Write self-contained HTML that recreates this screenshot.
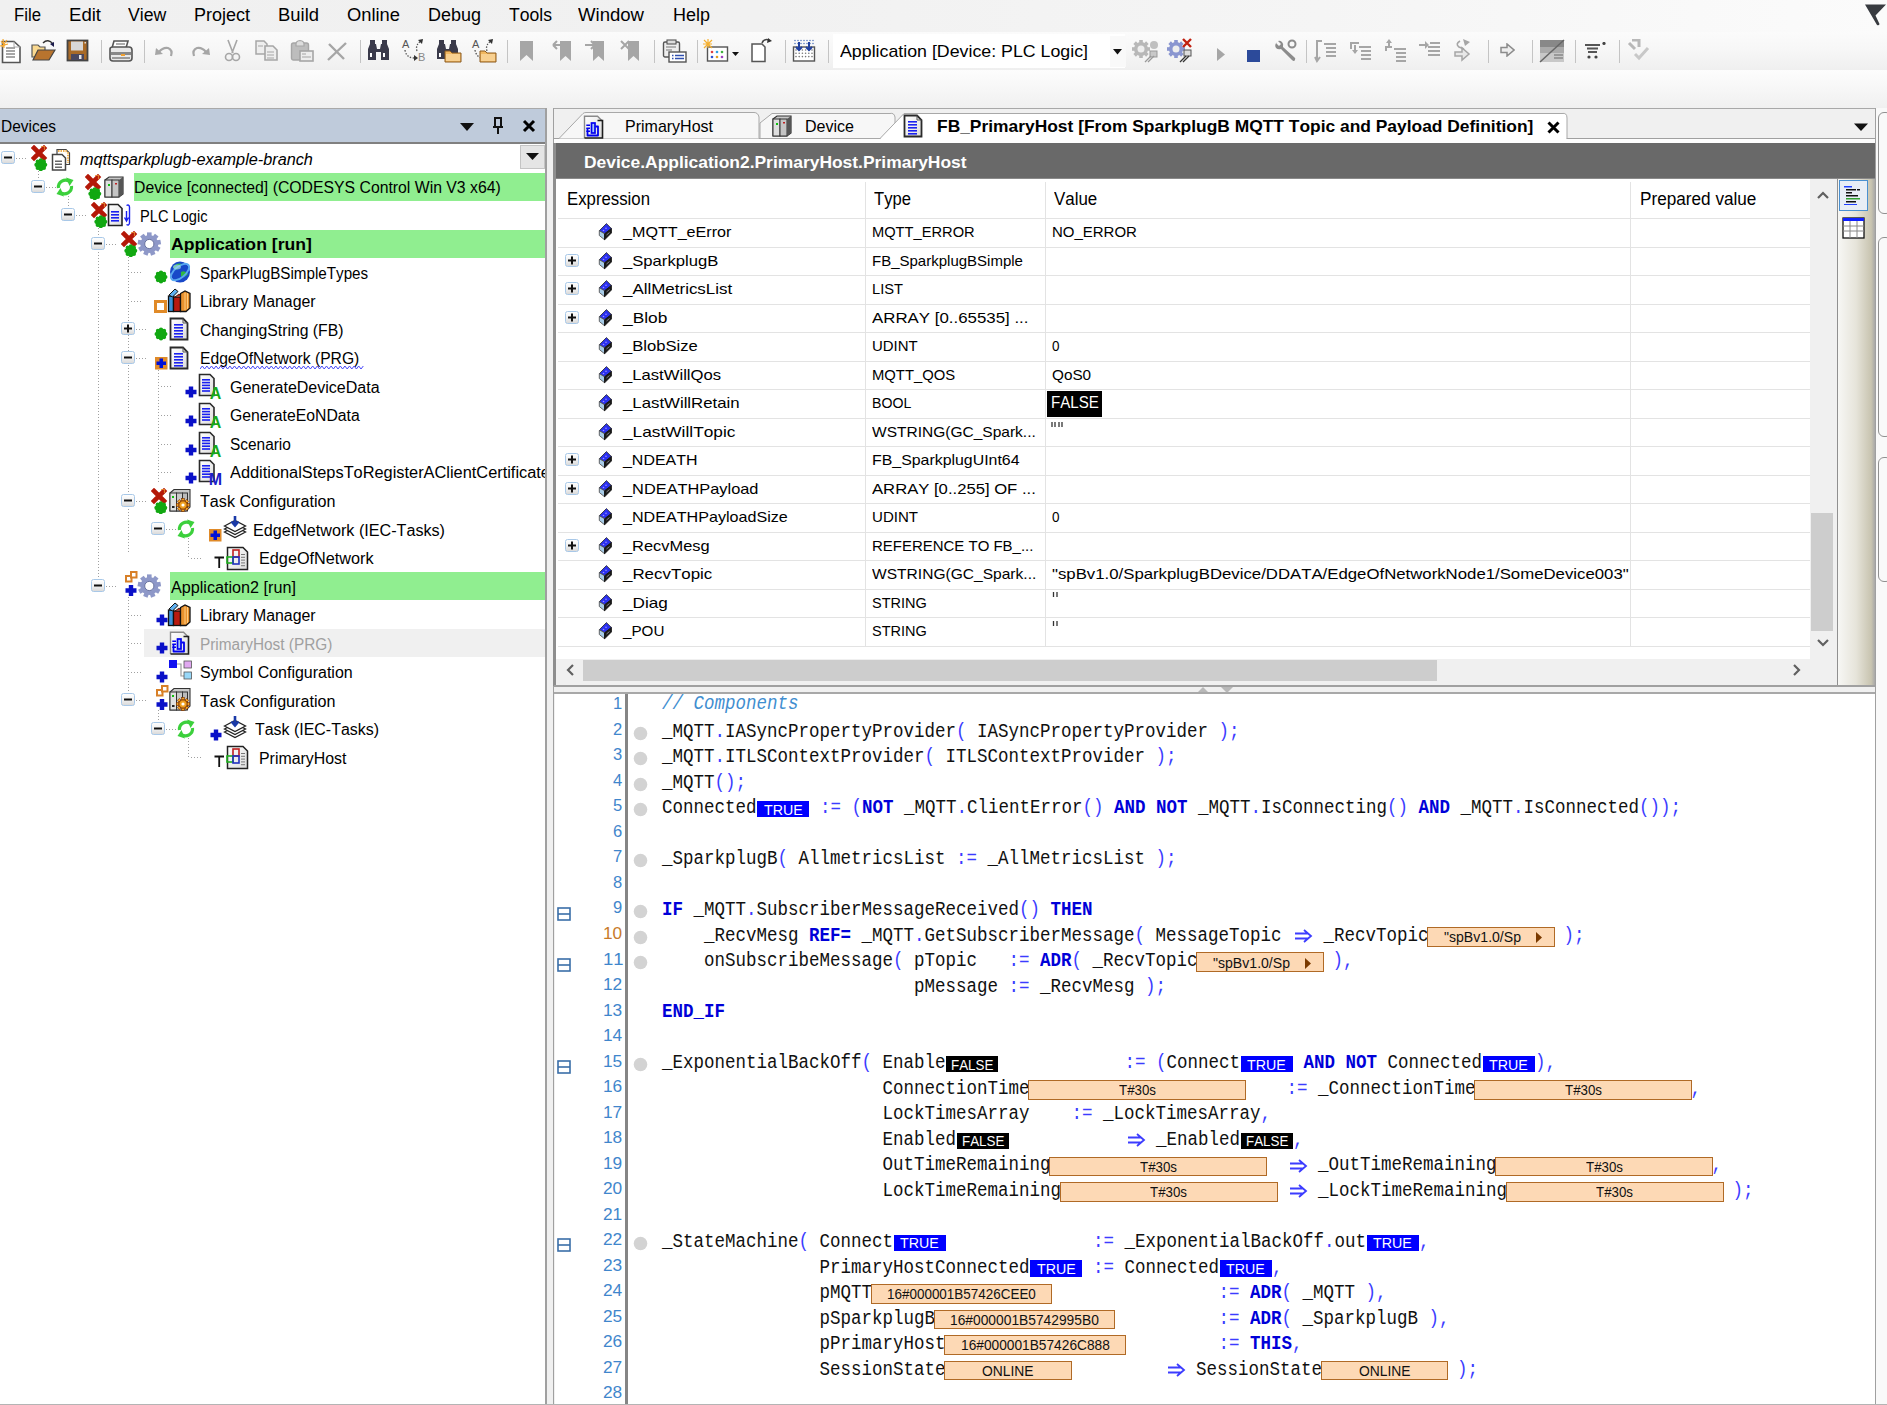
<!DOCTYPE html>
<html><head><meta charset="utf-8"><style>
html,body{margin:0;padding:0;}
body{width:1887px;height:1405px;overflow:hidden;position:relative;background:#f0f0f0;font-family:"Liberation Sans",sans-serif;font-kerning:none;}
div,svg{position:absolute;}
.t{white-space:pre;line-height:1;}
</style></head><body>
<svg width="0" height="0" style="left:0;top:0"><defs><linearGradient id="bxg" x1="0" y1="0" x2="0" y2="1"><stop offset="0" stop-color="#ffffff"/><stop offset="0.5" stop-color="#f2f2f2"/><stop offset="1" stop-color="#d8d8d8"/></linearGradient><linearGradient id="pgg" x1="0" y1="0" x2="1" y2="1"><stop offset="0" stop-color="#fff"/><stop offset="1" stop-color="#dcdcdc"/></linearGradient></defs></svg>
<div style="left:0px;top:0px;width:1887px;height:32px;background:linear-gradient(90deg,#f0f0f0 0%,#f1f1f1 40%,#f5f5f5 70%,#fbfbfb 100%);"></div>
<div class="t" style="left:14px;top:6.68px;font-size:17.5px;color:#000;transform:scale(0.9573,1.0);transform-origin:0 14.82px;">File</div>
<div class="t" style="left:69px;top:6.68px;font-size:17.5px;color:#000;transform:scale(1.0611,1.0);transform-origin:0 14.82px;">Edit</div>
<div class="t" style="left:128px;top:6.68px;font-size:17.5px;color:#000;transform:scale(1.0100,1.0);transform-origin:0 14.82px;">View</div>
<div class="t" style="left:194px;top:6.68px;font-size:17.5px;color:#000;transform:scale(1.0281,1.0);transform-origin:0 14.82px;">Project</div>
<div class="t" style="left:278px;top:6.68px;font-size:17.5px;color:#000;transform:scale(1.0534,1.0);transform-origin:0 14.82px;">Build</div>
<div class="t" style="left:347px;top:6.68px;font-size:17.5px;color:#000;transform:scale(1.0476,1.0);transform-origin:0 14.82px;">Online</div>
<div class="t" style="left:428px;top:6.68px;font-size:17.5px;color:#000;transform:scale(1.0276,1.0);transform-origin:0 14.82px;">Debug</div>
<div class="t" style="left:509px;top:6.68px;font-size:17.5px;color:#000;transform:scale(1.0034,1.0);transform-origin:0 14.82px;">Tools</div>
<div class="t" style="left:578px;top:6.68px;font-size:17.5px;color:#000;transform:scale(1.0602,1.0);transform-origin:0 14.82px;">Window</div>
<div class="t" style="left:673px;top:6.68px;font-size:17.5px;color:#000;transform:scale(1.0278,1.0);transform-origin:0 14.82px;">Help</div>
<svg style="left:1858px;top:3px;" width="29" height="26" viewBox="0 0 29 26"><path d="M7 1.5 H28 L17.5 12.5 L21.5 21 Q21 23 19 22 Z" fill="#383b40"/></svg>
<div style="left:0px;top:32px;width:1887px;height:38px;background:linear-gradient(#fbfbfb 0%,#f7f7f7 45%,#efefef 100%);"></div>
<div style="left:0px;top:70px;width:1887px;height:38px;background:linear-gradient(#fdfdfd 0%,#f8f8f8 40%,#f0f0f0 100%);"></div>
<div style="left:101px;top:40px;width:1px;height:23px;background:#c4c4c4;"></div>
<div style="left:144px;top:40px;width:1px;height:23px;background:#c4c4c4;"></div>
<div style="left:360px;top:40px;width:1px;height:23px;background:#c4c4c4;"></div>
<div style="left:507px;top:40px;width:1px;height:23px;background:#c4c4c4;"></div>
<div style="left:654px;top:40px;width:1px;height:23px;background:#c4c4c4;"></div>
<div style="left:697px;top:40px;width:1px;height:23px;background:#c4c4c4;"></div>
<div style="left:785px;top:40px;width:1px;height:23px;background:#c4c4c4;"></div>
<div style="left:828px;top:40px;width:1px;height:23px;background:#c4c4c4;"></div>
<div style="left:1306px;top:40px;width:1px;height:23px;background:#c4c4c4;"></div>
<div style="left:1488px;top:40px;width:1px;height:23px;background:#c4c4c4;"></div>
<div style="left:1532px;top:40px;width:1px;height:23px;background:#c4c4c4;"></div>
<div style="left:1575px;top:40px;width:1px;height:23px;background:#c4c4c4;"></div>
<div style="left:1619px;top:40px;width:1px;height:23px;background:#c4c4c4;"></div>
<svg style="left:0px;top:39px;" width="22" height="25" viewBox="0 0 22 25"><path d="M2.5 2.5 H14 L20 8 V23.5 H2.5Z" fill="#fff" stroke="#555" stroke-width="1.6"/><path d="M14 2.5 V8 H20" fill="none" stroke="#aaa" stroke-width="1"/><path d="M6 9 H15 M6 12 H15 M6 15 H15 M6 18 H15" stroke="#8a8a8a" stroke-width="1.4"/><path d="M1 2 L5 7 M0 7 L8 5 M3 0 L4 9 M7 1 L2 8" stroke="#f5a830" stroke-width="1.2"/></svg>
<svg style="left:30px;top:39px;" width="26" height="22" viewBox="0 0 26 22"><path d="M2 6 H8 L10 8 H15 V18 H2Z" fill="#fad990" stroke="#555" stroke-width="1.2"/><path d="M3 21 L8 11 H25 L19 21Z" fill="#b8742e" stroke="#444" stroke-width="1.2"/><path d="M13 4 Q18 -1 23 5" fill="none" stroke="#333" stroke-width="1.4"/><path d="M20 5 L24 8 L24 3Z" fill="#1a1a4a"/></svg>
<svg style="left:66px;top:39px;" width="23" height="23" viewBox="0 0 23 23"><rect x="1.5" y="1.5" width="20" height="20" fill="#a86a28" stroke="#444" stroke-width="1.8"/><rect x="5" y="2.5" width="12" height="9" fill="#d8d8d8"/><rect x="5" y="15" width="13" height="6" fill="#4a4860"/><rect x="13" y="16" width="2.5" height="4" fill="#e8e8e8"/><rect x="18.5" y="3" width="1.5" height="1.5" fill="#ddd"/></svg>
<svg style="left:108px;top:39px;" width="26" height="24" viewBox="0 0 26 24"><path d="M6 2 H20 L18 9 H4Z" fill="#fff" stroke="#555" stroke-width="1.6"/><path d="M8 5 H17" stroke="#777" stroke-width="1.2"/><path d="M2 10 Q2 8 5 8 H21 Q24 8 24 11 V19 Q24 22 21 22 H5 Q2 22 2 19Z" fill="#e8e8e8" stroke="#555" stroke-width="1.6"/><rect x="3" y="13" width="20" height="3" fill="#888"/><rect x="13" y="15" width="4" height="2" fill="#f0a030"/><path d="M4 19 H22" stroke="#666" stroke-width="1.2"/></svg>
<svg style="left:154px;top:44px;" width="22" height="15" viewBox="0 0 22 15"><path d="M5 8 Q9 3 14 4 Q19 6 17 12" fill="none" stroke="#a6a6a6" stroke-width="2.2"/><path d="M1 11 L2 4 L9 10Z" fill="#a6a6a6"/></svg>
<svg style="left:189px;top:44px;" width="22" height="15" viewBox="0 0 22 15"><path d="M17 8 Q13 3 8 4 Q3 6 5 12" fill="none" stroke="#a6a6a6" stroke-width="2.2"/><path d="M21 11 L20 4 L13 10Z" fill="#a6a6a6"/></svg>
<svg style="left:224px;top:39px;" width="17" height="23" viewBox="0 0 17 23"><path d="M4 1 L9 14 M13 1 L8 14" stroke="#a6a6a6" stroke-width="1.6" fill="none"/><circle cx="5" cy="18" r="3.5" fill="none" stroke="#a6a6a6" stroke-width="1.6"/><circle cx="12" cy="18" r="3.5" fill="none" stroke="#a6a6a6" stroke-width="1.6"/></svg>
<svg style="left:255px;top:40px;" width="24" height="21" viewBox="0 0 24 21"><path d="M1 1 H9 L12 4 V14 H1Z" fill="#eee" stroke="#a6a6a6" stroke-width="1.5"/><path d="M10 6 H18 L22 10 V20 H10Z" fill="#eee" stroke="#a6a6a6" stroke-width="1.6"/><path d="M3 6 H8 M12 12 H19 M12 15 H19 M12 18 H19" stroke="#a6a6a6" stroke-width="1.1"/></svg>
<svg style="left:290px;top:39px;" width="25" height="23" viewBox="0 0 25 23"><rect x="1.5" y="4" width="17" height="17" rx="2" fill="#bdbdbd" stroke="#a6a6a6" stroke-width="1.4"/><path d="M6 5 Q6 2 10 1.5 Q14 2 14 5 V7 H6Z" fill="#ddd" stroke="#a6a6a6" stroke-width="1.2"/><rect x="10" y="12" width="13" height="10" fill="#eee" stroke="#a6a6a6" stroke-width="1.6"/><path d="M12 15 H16 M12 18 H21" stroke="#a6a6a6" stroke-width="1.2"/></svg>
<svg style="left:326px;top:41px;" width="22" height="21" viewBox="0 0 22 21"><path d="M2 19 L20 2 M3 3 L18 18" stroke="#a6a6a6" stroke-width="2.4"/></svg>
<svg style="left:367px;top:39px;" width="25" height="22" viewBox="0 0 25 22"><rect x="3" y="1" width="5" height="5" fill="#3a3a4a"/><rect x="15" y="1" width="5" height="5" fill="#3a3a4a"/><path d="M1 21 V10 L3 5 H9 L10 10 H13 L14 5 H20 L22 10 V21 H14 V13 H9 V21Z" fill="#3a3a4a"/><rect x="3" y="14" width="2" height="4" fill="#fff"/><rect x="16" y="14" width="2" height="4" fill="#fff"/></svg>
<svg style="left:401px;top:38px;" width="27" height="24" viewBox="0 0 27 24"><text x="1" y="10" font-family="Liberation Sans" font-size="11" fill="#555">A</text><text x="17" y="23" font-family="Liberation Sans" font-size="11" fill="#888">B</text><path d="M4 12 Q5 20 14 20" fill="none" stroke="#555" stroke-width="1.3" stroke-dasharray="1.5 1.5"/><path d="M13 17 L17 20 L13 23Z" fill="#333"/><path d="M16 13 Q14 7 20 3" fill="none" stroke="#555" stroke-width="1.3" stroke-dasharray="1.5 1.5"/><path d="M17 2 L22 1 L21 6Z" fill="#333"/></svg>
<svg style="left:436px;top:39px;" width="27" height="24" viewBox="0 0 27 24"><rect x="3" y="1" width="5" height="5" fill="#3a3a4a"/><rect x="15" y="1" width="5" height="5" fill="#3a3a4a"/><path d="M1 20 V10 L3 5 H9 L10 10 H13 L14 5 H20 L22 10 V20 H14 V13 H9 V20Z" fill="#3a3a4a"/><rect x="3" y="14" width="2" height="4" fill="#fff"/><path d="M9 12 H14 L16 14 H25 V23 H9Z" fill="#f2b860" stroke="#8a5a20" stroke-width="1"/><path d="M10 15 H24 V22 H10Z" fill="#f8d090"/></svg>
<svg style="left:471px;top:38px;" width="27" height="25" viewBox="0 0 27 25"><text x="1" y="10" font-family="Liberation Sans" font-size="11" fill="#555">A</text><path d="M4 12 Q5 18 10 20" fill="none" stroke="#555" stroke-width="1.3" stroke-dasharray="1.5 1.5"/><path d="M16 13 Q14 7 20 3" fill="none" stroke="#555" stroke-width="1.3" stroke-dasharray="1.5 1.5"/><path d="M17 2 L22 1 L21 6Z" fill="#333"/><path d="M9 13 H14 L16 15 H25 V24 H9Z" fill="#f2b860" stroke="#8a5a20" stroke-width="1"/><path d="M10 16 H24 V23 H10Z" fill="#f8d090"/></svg>
<svg style="left:519px;top:39px;" width="16" height="24" viewBox="0 0 16 24"><path d="M1 2 H14 V22 L7.5 16 L1 22Z" fill="#a6a6a6"/></svg>
<svg style="left:552px;top:39px;" width="22" height="24" viewBox="0 0 22 24"><path d="M8 2 H19 V22 L13.5 17 L8 22Z" fill="#a6a6a6"/><path d="M1 6 L5 2 M1 6 L5 10 M1 6 H11" stroke="#a6a6a6" stroke-width="2" fill="none"/></svg>
<svg style="left:585px;top:39px;" width="22" height="24" viewBox="0 0 22 24"><path d="M8 2 H19 V22 L13.5 17 L8 22Z" fill="#a6a6a6"/><path d="M10 6 L6 2 M10 6 L6 10 M10 6 H0" stroke="#a6a6a6" stroke-width="2" fill="none"/></svg>
<svg style="left:620px;top:39px;" width="22" height="24" viewBox="0 0 22 24"><path d="M8 2 H19 V22 L13.5 17 L8 22Z" fill="#a6a6a6"/><path d="M1 2 L9 10 M9 2 L1 10" stroke="#a6a6a6" stroke-width="2" fill="none"/></svg>
<svg style="left:662px;top:39px;" width="26" height="24" viewBox="0 0 26 24"><rect x="1.5" y="3" width="16" height="15" rx="1.5" fill="#eee" stroke="#555" stroke-width="1.4"/><rect x="5" y="1" width="9" height="4" fill="#ddd" stroke="#555" stroke-width="1.1"/><path d="M4 8 H14 M4 11 H10" stroke="#777" stroke-width="1.2"/><rect x="7" y="13" width="17" height="10" fill="#fff" stroke="#555" stroke-width="1.4"/><path d="M10 16.5 H11.5 M13 16.5 H22 M10 19.5 H11.5 M13 19.5 H22" stroke="#3050b0" stroke-width="1.6"/></svg>
<svg style="left:703px;top:39px;" width="38" height="24" viewBox="0 0 38 24"><rect x="4.5" y="8" width="20" height="14" fill="#fff" stroke="#555" stroke-width="1.4"/><circle cx="9" cy="13" r="1.3" fill="#e04040"/><circle cx="14" cy="13" r="1.3" fill="#30a0e0"/><circle cx="19" cy="13" r="1.3" fill="#40b040"/><circle cx="9" cy="18" r="1.3" fill="#3050d0"/><circle cx="14" cy="18" r="1.3" fill="#e0a020"/><circle cx="19" cy="18" r="1.3" fill="#a040c0"/><path d="M1 1 L9 9 M5 0 V9 M0 5 H9 M9 1 L1 9" stroke="#f5b030" stroke-width="1.2"/><path d="M29 13 H36 L32.5 17Z" fill="#111"/></svg>
<svg style="left:750px;top:38px;" width="24" height="25" viewBox="0 0 24 25"><path d="M2 6 H12 L15 9 V23.5 H2Z" fill="#fff" stroke="#555" stroke-width="1.5"/><path d="M12 5 Q14 0 19 2" fill="none" stroke="#444" stroke-width="1.5"/><path d="M18 0 L22 3 L17 5Z" fill="#333"/></svg>
<svg style="left:792px;top:39px;" width="24" height="23" viewBox="0 0 24 23"><rect x="1.5" y="8" width="21" height="14" fill="#fff" stroke="#555" stroke-width="1.4"/><circle cx="4.0" cy="11.0" r="0.8" fill="#777"/><circle cx="4.0" cy="14.3" r="0.8" fill="#777"/><circle cx="4.0" cy="17.6" r="0.8" fill="#777"/><circle cx="7.2" cy="11.0" r="0.8" fill="#777"/><circle cx="7.2" cy="14.3" r="0.8" fill="#777"/><circle cx="7.2" cy="17.6" r="0.8" fill="#777"/><circle cx="10.4" cy="11.0" r="0.8" fill="#777"/><circle cx="10.4" cy="14.3" r="0.8" fill="#777"/><circle cx="10.4" cy="17.6" r="0.8" fill="#777"/><circle cx="13.6" cy="11.0" r="0.8" fill="#777"/><circle cx="13.6" cy="14.3" r="0.8" fill="#777"/><circle cx="13.6" cy="17.6" r="0.8" fill="#777"/><circle cx="16.8" cy="11.0" r="0.8" fill="#777"/><circle cx="16.8" cy="14.3" r="0.8" fill="#777"/><circle cx="16.8" cy="17.6" r="0.8" fill="#777"/><circle cx="20.0" cy="11.0" r="0.8" fill="#777"/><circle cx="20.0" cy="14.3" r="0.8" fill="#777"/><circle cx="20.0" cy="17.6" r="0.8" fill="#777"/><circle cx="3.0" cy="1.5" r="0.8" fill="#6080c0"/><circle cx="3.0" cy="4.5" r="0.8" fill="#6080c0"/><circle cx="6.0" cy="1.5" r="0.8" fill="#6080c0"/><circle cx="6.0" cy="4.5" r="0.8" fill="#6080c0"/><circle cx="9.0" cy="1.5" r="0.8" fill="#6080c0"/><circle cx="9.0" cy="4.5" r="0.8" fill="#6080c0"/><circle cx="12.0" cy="1.5" r="0.8" fill="#6080c0"/><circle cx="12.0" cy="4.5" r="0.8" fill="#6080c0"/><circle cx="15.0" cy="1.5" r="0.8" fill="#6080c0"/><circle cx="15.0" cy="4.5" r="0.8" fill="#6080c0"/><circle cx="18.0" cy="1.5" r="0.8" fill="#6080c0"/><circle cx="18.0" cy="4.5" r="0.8" fill="#6080c0"/><circle cx="21.0" cy="1.5" r="0.8" fill="#6080c0"/><circle cx="21.0" cy="4.5" r="0.8" fill="#6080c0"/><path d="M7 3 V11 M4 8 L7 11 L10 8 M17 3 V11 M14 8 L17 11 L20 8" stroke="#2040a0" stroke-width="2" fill="none"/></svg>
<svg style="left:1132px;top:38px;" width="28" height="26" viewBox="0 0 28 26"><g transform="translate(9,11)"><circle r="7" fill="#b8b8b8"/><rect x="-1.8" y="-9" width="3.6" height="4" fill="#b8b8b8" transform="rotate(0)"/><rect x="-1.8" y="-9" width="3.6" height="4" fill="#b8b8b8" transform="rotate(45)"/><rect x="-1.8" y="-9" width="3.6" height="4" fill="#b8b8b8" transform="rotate(90)"/><rect x="-1.8" y="-9" width="3.6" height="4" fill="#b8b8b8" transform="rotate(135)"/><rect x="-1.8" y="-9" width="3.6" height="4" fill="#b8b8b8" transform="rotate(180)"/><rect x="-1.8" y="-9" width="3.6" height="4" fill="#b8b8b8" transform="rotate(225)"/><rect x="-1.8" y="-9" width="3.6" height="4" fill="#b8b8b8" transform="rotate(270)"/><rect x="-1.8" y="-9" width="3.6" height="4" fill="#b8b8b8" transform="rotate(315)"/><circle r="3.5" fill="#eee"/></g><circle cx="22" cy="7" r="4" fill="#c0c0c0"/><rect x="18" y="13" width="7" height="6" fill="#c8c8c8" stroke="#999"/><path d="M13 24 L19 18 M16 24 L22 18" stroke="#999" stroke-width="1.3"/></svg>
<svg style="left:1167px;top:37px;" width="27" height="27" viewBox="0 0 27 27"><g transform="translate(9,12)"><circle r="7" fill="#8a96d0"/><rect x="-1.8" y="-9" width="3.6" height="4" fill="#8a96d0" transform="rotate(0)"/><rect x="-1.8" y="-9" width="3.6" height="4" fill="#8a96d0" transform="rotate(45)"/><rect x="-1.8" y="-9" width="3.6" height="4" fill="#8a96d0" transform="rotate(90)"/><rect x="-1.8" y="-9" width="3.6" height="4" fill="#8a96d0" transform="rotate(135)"/><rect x="-1.8" y="-9" width="3.6" height="4" fill="#8a96d0" transform="rotate(180)"/><rect x="-1.8" y="-9" width="3.6" height="4" fill="#8a96d0" transform="rotate(225)"/><rect x="-1.8" y="-9" width="3.6" height="4" fill="#8a96d0" transform="rotate(270)"/><rect x="-1.8" y="-9" width="3.6" height="4" fill="#8a96d0" transform="rotate(315)"/><circle r="3.5" fill="#eee"/></g><path d="M16 2 L24 10 M24 2 L16 10" stroke="#c02010" stroke-width="2.4"/><rect x="17" y="13" width="7" height="6" fill="#ddd" stroke="#555"/><path d="M13 25 L19 19 M16 25 L22 19" stroke="#333" stroke-width="1.3"/></svg>
<svg style="left:1216px;top:47px;" width="10" height="15" viewBox="0 0 10 15"><path d="M1 1 L9 7.5 L1 14Z" fill="#a6a6a6"/></svg>
<div style="left:1247px;top:49.5px;width:12.5px;height:12px;background:#2c4a9a;"></div>
<svg style="left:1273px;top:39px;" width="24" height="24" viewBox="0 0 24 24"><path d="M4 3 Q1 6 3 9 Q5 11 8 10 L19 21 Q21 23 22 21 Q23 19 21 18 L10 8 Q11 5 9 3 Q7 1 5 2 L8 5 L6 7 L3 4Z" fill="#8c8c8c"/><circle cx="19" cy="5" r="3.5" fill="none" stroke="#8c8c8c" stroke-width="2"/></svg>
<svg style="left:1314px;top:39px;" width="24" height="24" viewBox="0 0 24 24"><path d="M8 2 H3 V21 M1 18 L3 22 L6 18" fill="none" stroke="#a6a6a6" stroke-width="2"/><path d="M10 5 H22 M12 9 H22 M12 13 H22 M12 17 H22" stroke="#a6a6a6" stroke-width="1.8"/></svg>
<svg style="left:1349px;top:39px;" width="24" height="24" viewBox="0 0 24 24"><path d="M2 10 V4 H10 M6 6 V14" fill="none" stroke="#a6a6a6" stroke-width="2"/><path d="M3 11 L6 15 L9 11Z" fill="#a6a6a6"/><path d="M10 8 H22 M12 12 H22 M12 16 H22 M12 20 H22" stroke="#a6a6a6" stroke-width="1.8"/></svg>
<svg style="left:1384px;top:39px;" width="24" height="24" viewBox="0 0 24 24"><path d="M2 12 V8 H8 M5 9 V2" fill="none" stroke="#a6a6a6" stroke-width="2"/><path d="M2 4 L5 0 L8 4Z" fill="#a6a6a6"/><path d="M10 10 H22 M12 14 H22 M12 18 H22 M12 22 H22" stroke="#a6a6a6" stroke-width="1.8"/></svg>
<svg style="left:1418px;top:39px;" width="24" height="24" viewBox="0 0 24 24"><path d="M1 6 H8" stroke="#a6a6a6" stroke-width="2"/><path d="M7 2 L11 6 L7 10Z" fill="#a6a6a6"/><path d="M12 4 H22 M10 8 H22 M10 12 H22 M10 16 H22" stroke="#a6a6a6" stroke-width="1.8"/></svg>
<svg style="left:1454px;top:38px;" width="18" height="25" viewBox="0 0 18 25"><path d="M6 3 Q1 6 5 9 L10 11" fill="none" stroke="#a6a6a6" stroke-width="1.6"/><path d="M9 1 L16 4 L11 8Z" fill="#a6a6a6"/><path d="M1 14 H8 V10 L15 16 L8 22 V18 H1Z" fill="#e8e8e8" stroke="#a6a6a6" stroke-width="1.5"/></svg>
<svg style="left:1500px;top:43px;" width="15" height="14" viewBox="0 0 15 14"><path d="M1 4.5 H7 V1 L14 7 L7 13 V9.5 H1Z" fill="#eee" stroke="#8c8c8c" stroke-width="1.5"/></svg>
<svg style="left:1539px;top:39px;" width="26" height="25" viewBox="0 0 26 25"><rect x="1" y="1" width="24" height="22" fill="#c8c8c8"/><rect x="1" y="1" width="24" height="7" fill="#888"/><rect x="1" y="8" width="24" height="6" fill="#aaa"/><path d="M1 23 L25 1" stroke="#666" stroke-width="1.5"/><path d="M15 16 H24 M15 19 H24" stroke="#888" stroke-width="1.3"/></svg>
<svg style="left:1584px;top:42px;" width="23" height="18" viewBox="0 0 23 18"><path d="M1 3 H16 M3 6.5 H14 M4 10 H13" stroke="#555" stroke-width="2"/><circle cx="5" cy="15" r="1.6" fill="#444"/><circle cx="12" cy="15" r="1.6" fill="#444"/><circle cx="20" cy="1.5" r="1.6" fill="#444"/></svg>
<svg style="left:1627px;top:39px;" width="24" height="23" viewBox="0 0 24 23"><path d="M2 4 L8 10 M5 1 H12 V8" fill="none" stroke="#b8b8b8" stroke-width="3"/><path d="M8 15 L12 19 L21 9" fill="none" stroke="#c8c8c8" stroke-width="3"/></svg>
<div style="left:833px;top:34px;width:292px;height:34px;background:#ffffff;"></div>
<div class="t" style="left:840px;top:43.11px;font-size:17px;color:#000;transform:scale(1.0457,1.0);transform-origin:0 14.39px;">Application [Device: PLC Logic]</div>
<div style="left:1110px;top:36px;width:16px;height:31px;background:#f9f9f9;"></div>
<svg style="left:1113px;top:49px;" width="10" height="6" viewBox="0 0 10 6"><path d="M0 0 H9 L4.5 5.5Z" fill="#111"/></svg>
<div style="left:0px;top:108px;width:547px;height:1px;background:#a9a9a9;"></div>
<div style="left:0px;top:109px;width:546px;height:34px;background:#bfcbdb;"></div>
<div style="left:0px;top:142px;width:546px;height:2px;background:#808080;"></div>
<div class="t" style="left:1px;top:117.83px;font-size:16.5px;color:#000;transform:scale(0.9372,1.0);transform-origin:0 13.97px;">Devices</div>
<svg style="left:459px;top:122px;" width="16" height="10" viewBox="0 0 16 10"><path d="M1 1 H15 L8 9Z" fill="#111"/></svg>
<svg style="left:491px;top:117px;" width="14" height="18" viewBox="0 0 14 18"><path d="M3 1 H11 M4 1 V10 H10 V1 M2 10 H12 M7 10 V17" fill="none" stroke="#111" stroke-width="2"/></svg>
<svg style="left:521px;top:118px;" width="16" height="16" viewBox="0 0 16 16"><path d="M3 3 L13 13 M13 3 L3 13" stroke="#000" stroke-width="3"/></svg>
<div style="left:0px;top:144px;width:546px;height:1261px;background:#ffffff;"></div>
<div style="left:545px;top:108px;width:2px;height:1297px;background:#a0a0a0;"></div>
<div style="left:520px;top:145px;width:25px;height:24px;background:#e5e5e5;box-sizing:border-box;border:1px solid #c4c4c4;"></div>
<svg style="left:526px;top:153px;" width="13" height="8" viewBox="0 0 13 8"><path d="M0 0 H13 L6.5 7Z" fill="#111"/></svg>
<div style="left:134px;top:173px;width:411px;height:28px;background:#90ee90;"></div>
<div style="left:170px;top:230px;width:375px;height:28px;background:#90ee90;"></div>
<div style="left:170px;top:572px;width:375px;height:28px;background:#90ee90;"></div>
<div style="left:144px;top:629px;width:401px;height:28px;background:#f0f0f0;"></div>
<div style="left:38px;top:168px;width:1px;height:10px;background:repeating-linear-gradient(180deg,#a0a0a0 0 1px,transparent 1px 3px)"></div>
<div style="left:68px;top:196px;width:1px;height:10px;background:repeating-linear-gradient(180deg,#a0a0a0 0 1px,transparent 1px 3px)"></div>
<div style="left:98px;top:225px;width:1px;height:360px;background:repeating-linear-gradient(180deg,#a0a0a0 0 1px,transparent 1px 3px)"></div>
<div style="left:128px;top:254px;width:1px;height:300px;background:repeating-linear-gradient(180deg,#a0a0a0 0 1px,transparent 1px 3px)"></div>
<div style="left:158px;top:370px;width:1px;height:112px;background:repeating-linear-gradient(180deg,#a0a0a0 0 1px,transparent 1px 3px)"></div>
<div style="left:188px;top:538px;width:1px;height:20px;background:repeating-linear-gradient(180deg,#a0a0a0 0 1px,transparent 1px 3px)"></div>
<div style="left:128px;top:597px;width:1px;height:105px;background:repeating-linear-gradient(180deg,#a0a0a0 0 1px,transparent 1px 3px)"></div>
<div style="left:158px;top:710px;width:1px;height:12px;background:repeating-linear-gradient(180deg,#a0a0a0 0 1px,transparent 1px 3px)"></div>
<div style="left:188px;top:738px;width:1px;height:20px;background:repeating-linear-gradient(180deg,#a0a0a0 0 1px,transparent 1px 3px)"></div>
<svg style="left:1px;top:151px;" width="14" height="13" viewBox="0 0 14 13"><rect x="0.5" y="0.5" width="13" height="12" rx="2" fill="url(#bxg)" stroke="#a8c8e8"/><rect x="3" y="5.5" width="8" height="2" fill="#111"/></svg>
<div style="left:16px;top:158px;width:10px;height:1px;background:repeating-linear-gradient(90deg,#a0a0a0 0 1px,transparent 1px 3px)"></div>
<svg style="left:31px;top:180px;" width="14" height="13" viewBox="0 0 14 13"><rect x="0.5" y="0.5" width="13" height="12" rx="2" fill="url(#bxg)" stroke="#a8c8e8"/><rect x="3" y="5.5" width="8" height="2" fill="#111"/></svg>
<div style="left:46px;top:187px;width:10px;height:1px;background:repeating-linear-gradient(90deg,#a0a0a0 0 1px,transparent 1px 3px)"></div>
<svg style="left:61px;top:208px;" width="14" height="13" viewBox="0 0 14 13"><rect x="0.5" y="0.5" width="13" height="12" rx="2" fill="url(#bxg)" stroke="#a8c8e8"/><rect x="3" y="5.5" width="8" height="2" fill="#111"/></svg>
<div style="left:76px;top:215px;width:10px;height:1px;background:repeating-linear-gradient(90deg,#a0a0a0 0 1px,transparent 1px 3px)"></div>
<svg style="left:91px;top:237px;" width="14" height="13" viewBox="0 0 14 13"><rect x="0.5" y="0.5" width="13" height="12" rx="2" fill="url(#bxg)" stroke="#a8c8e8"/><rect x="3" y="5.5" width="8" height="2" fill="#111"/></svg>
<div style="left:106px;top:244px;width:10px;height:1px;background:repeating-linear-gradient(90deg,#a0a0a0 0 1px,transparent 1px 3px)"></div>
<svg style="left:121px;top:322px;" width="14" height="13" viewBox="0 0 14 13"><rect x="0.5" y="0.5" width="13" height="12" rx="2" fill="url(#bxg)" stroke="#a8c8e8"/><rect x="3" y="5.5" width="8" height="2" fill="#111"/><rect x="6" y="2.5" width="2" height="8" fill="#111"/></svg>
<div style="left:136px;top:329px;width:10px;height:1px;background:repeating-linear-gradient(90deg,#a0a0a0 0 1px,transparent 1px 3px)"></div>
<svg style="left:121px;top:351px;" width="14" height="13" viewBox="0 0 14 13"><rect x="0.5" y="0.5" width="13" height="12" rx="2" fill="url(#bxg)" stroke="#a8c8e8"/><rect x="3" y="5.5" width="8" height="2" fill="#111"/></svg>
<div style="left:136px;top:358px;width:10px;height:1px;background:repeating-linear-gradient(90deg,#a0a0a0 0 1px,transparent 1px 3px)"></div>
<svg style="left:121px;top:494px;" width="14" height="13" viewBox="0 0 14 13"><rect x="0.5" y="0.5" width="13" height="12" rx="2" fill="url(#bxg)" stroke="#a8c8e8"/><rect x="3" y="5.5" width="8" height="2" fill="#111"/></svg>
<div style="left:136px;top:501px;width:10px;height:1px;background:repeating-linear-gradient(90deg,#a0a0a0 0 1px,transparent 1px 3px)"></div>
<svg style="left:151px;top:522px;" width="14" height="13" viewBox="0 0 14 13"><rect x="0.5" y="0.5" width="13" height="12" rx="2" fill="url(#bxg)" stroke="#a8c8e8"/><rect x="3" y="5.5" width="8" height="2" fill="#111"/></svg>
<div style="left:166px;top:529px;width:10px;height:1px;background:repeating-linear-gradient(90deg,#a0a0a0 0 1px,transparent 1px 3px)"></div>
<svg style="left:91px;top:579px;" width="14" height="13" viewBox="0 0 14 13"><rect x="0.5" y="0.5" width="13" height="12" rx="2" fill="url(#bxg)" stroke="#a8c8e8"/><rect x="3" y="5.5" width="8" height="2" fill="#111"/></svg>
<div style="left:106px;top:586px;width:10px;height:1px;background:repeating-linear-gradient(90deg,#a0a0a0 0 1px,transparent 1px 3px)"></div>
<svg style="left:121px;top:693px;" width="14" height="13" viewBox="0 0 14 13"><rect x="0.5" y="0.5" width="13" height="12" rx="2" fill="url(#bxg)" stroke="#a8c8e8"/><rect x="3" y="5.5" width="8" height="2" fill="#111"/></svg>
<div style="left:136px;top:700px;width:10px;height:1px;background:repeating-linear-gradient(90deg,#a0a0a0 0 1px,transparent 1px 3px)"></div>
<svg style="left:151px;top:722px;" width="14" height="13" viewBox="0 0 14 13"><rect x="0.5" y="0.5" width="13" height="12" rx="2" fill="url(#bxg)" stroke="#a8c8e8"/><rect x="3" y="5.5" width="8" height="2" fill="#111"/></svg>
<div style="left:166px;top:729px;width:10px;height:1px;background:repeating-linear-gradient(90deg,#a0a0a0 0 1px,transparent 1px 3px)"></div>
<div style="left:131px;top:272px;width:12px;height:1px;background:repeating-linear-gradient(90deg,#a0a0a0 0 1px,transparent 1px 3px)"></div>
<div style="left:131px;top:301px;width:12px;height:1px;background:repeating-linear-gradient(90deg,#a0a0a0 0 1px,transparent 1px 3px)"></div>
<div style="left:131px;top:615px;width:12px;height:1px;background:repeating-linear-gradient(90deg,#a0a0a0 0 1px,transparent 1px 3px)"></div>
<div style="left:131px;top:643px;width:12px;height:1px;background:repeating-linear-gradient(90deg,#a0a0a0 0 1px,transparent 1px 3px)"></div>
<div style="left:131px;top:672px;width:12px;height:1px;background:repeating-linear-gradient(90deg,#a0a0a0 0 1px,transparent 1px 3px)"></div>
<div style="left:161px;top:386px;width:12px;height:1px;background:repeating-linear-gradient(90deg,#a0a0a0 0 1px,transparent 1px 3px)"></div>
<div style="left:161px;top:415px;width:12px;height:1px;background:repeating-linear-gradient(90deg,#a0a0a0 0 1px,transparent 1px 3px)"></div>
<div style="left:161px;top:444px;width:12px;height:1px;background:repeating-linear-gradient(90deg,#a0a0a0 0 1px,transparent 1px 3px)"></div>
<div style="left:161px;top:472px;width:12px;height:1px;background:repeating-linear-gradient(90deg,#a0a0a0 0 1px,transparent 1px 3px)"></div>
<div style="left:191px;top:558px;width:12px;height:1px;background:repeating-linear-gradient(90deg,#a0a0a0 0 1px,transparent 1px 3px)"></div>
<div style="left:191px;top:757px;width:12px;height:1px;background:repeating-linear-gradient(90deg,#a0a0a0 0 1px,transparent 1px 3px)"></div>
<svg style="left:31px;top:145px;" width="18" height="26" viewBox="0 0 18 26"><path d="M3 3 L13 13 M13 3 L3 13" stroke="#b41808" stroke-width="4.6" stroke-linecap="square"/><path d="M5 3 L3 5 M13 11 L11 13" stroke="#b41808" stroke-width="2"/><path d="M10 1.5 L13.5 1.5 L13.5 5" stroke="#e89030" stroke-width="1.2" fill="none" opacity="0.8"/><circle cx="9.8" cy="19.8" r="5.4" fill="#12a812"/><circle cx="14.20" cy="19.80" r="2.1" fill="#12a812"/><circle cx="12.91" cy="22.91" r="2.1" fill="#12a812"/><circle cx="9.80" cy="24.20" r="2.1" fill="#12a812"/><circle cx="6.69" cy="22.91" r="2.1" fill="#12a812"/><circle cx="5.40" cy="19.80" r="2.1" fill="#12a812"/><circle cx="6.69" cy="16.69" r="2.1" fill="#12a812"/><circle cx="9.80" cy="15.40" r="2.1" fill="#12a812"/><circle cx="12.91" cy="16.69" r="2.1" fill="#12a812"/></svg>
<svg style="left:51px;top:148px;" width="20" height="24" viewBox="0 0 20 24"><path d="M6 1.5 H15 L18.5 5 V16.5 H6Z" fill="#fff" stroke="#444" stroke-width="1.2"/><path d="M7 3 H15 L17 5 V15" fill="none" stroke="#f0b050" stroke-width="2" stroke-dasharray="1.5 1"/><path d="M1.5 6.5 H11 L14.5 10 V22 H1.5 Z" fill="#fff" stroke="#444" stroke-width="1.5"/><rect x="4" y="12.5" width="7" height="1.5" fill="#666"/><rect x="4" y="15.5" width="7" height="1.5" fill="#666"/><rect x="4" y="18.5" width="7" height="1.5" fill="#666"/></svg>
<svg style="left:54px;top:176px;" width="22" height="22" viewBox="0 0 22 22"><path d="M4.5 12 A7 7 0 0 1 15.5 5.5" fill="none" stroke="#3cd03c" stroke-width="3.2"/><path d="M12 1.5 L19.5 4 L15.5 10 Z" fill="#3cd03c"/><path d="M17.5 10 A7 7 0 0 1 6.5 16.5" fill="none" stroke="#3cd03c" stroke-width="3.2"/><path d="M10 20.5 L2.5 18 L6.5 12 Z" fill="#3cd03c"/></svg>
<svg style="left:85px;top:174px;" width="18" height="26" viewBox="0 0 18 26"><path d="M3 3 L13 13 M13 3 L3 13" stroke="#b41808" stroke-width="4.6" stroke-linecap="square"/><path d="M5 3 L3 5 M13 11 L11 13" stroke="#b41808" stroke-width="2"/><path d="M10 1.5 L13.5 1.5 L13.5 5" stroke="#e89030" stroke-width="1.2" fill="none" opacity="0.8"/><circle cx="9.8" cy="19.8" r="5.4" fill="#12a812"/><circle cx="14.20" cy="19.80" r="2.1" fill="#12a812"/><circle cx="12.91" cy="22.91" r="2.1" fill="#12a812"/><circle cx="9.80" cy="24.20" r="2.1" fill="#12a812"/><circle cx="6.69" cy="22.91" r="2.1" fill="#12a812"/><circle cx="5.40" cy="19.80" r="2.1" fill="#12a812"/><circle cx="6.69" cy="16.69" r="2.1" fill="#12a812"/><circle cx="9.80" cy="15.40" r="2.1" fill="#12a812"/><circle cx="12.91" cy="16.69" r="2.1" fill="#12a812"/></svg>
<svg style="left:103px;top:175px;" width="22" height="24" viewBox="0 0 22 24"><path d="M2 5 L6 2 H20 V19 L16 22 H2 Z" fill="#c8c8c8" stroke="#333" stroke-width="1.2"/><rect x="2" y="5" width="7" height="17" fill="#dedede" stroke="#333" stroke-width="1"/><rect x="9" y="5" width="7" height="17" fill="#c4c4c4" stroke="#333" stroke-width="1"/><path d="M16 5 L20 2 V19 L16 22Z" fill="#555"/><rect x="5" y="9" width="2" height="2" fill="#10c010"/><rect x="12" y="8" width="2" height="1.5" fill="#c02020"/></svg>
<svg style="left:91px;top:202px;" width="18" height="26" viewBox="0 0 18 26"><path d="M3 3 L13 13 M13 3 L3 13" stroke="#b41808" stroke-width="4.6" stroke-linecap="square"/><path d="M5 3 L3 5 M13 11 L11 13" stroke="#b41808" stroke-width="2"/><path d="M10 1.5 L13.5 1.5 L13.5 5" stroke="#e89030" stroke-width="1.2" fill="none" opacity="0.8"/><circle cx="9.8" cy="19.8" r="5.4" fill="#12a812"/><circle cx="14.20" cy="19.80" r="2.1" fill="#12a812"/><circle cx="12.91" cy="22.91" r="2.1" fill="#12a812"/><circle cx="9.80" cy="24.20" r="2.1" fill="#12a812"/><circle cx="6.69" cy="22.91" r="2.1" fill="#12a812"/><circle cx="5.40" cy="19.80" r="2.1" fill="#12a812"/><circle cx="6.69" cy="16.69" r="2.1" fill="#12a812"/><circle cx="9.80" cy="15.40" r="2.1" fill="#12a812"/><circle cx="12.91" cy="16.69" r="2.1" fill="#12a812"/></svg>
<svg style="left:107px;top:203px;" width="26" height="24" viewBox="0 0 26 24"><path d="M1.5 1.5 H11 L15 5.5 V22.5 H1.5 Z" fill="url(#pgg)" stroke="#222" stroke-width="1.6"/><rect x="4" y="8.0" width="8" height="1.6" fill="#1a20f0"/><rect x="4" y="11.0" width="8" height="1.6" fill="#1a20f0"/><rect x="4" y="14.0" width="8" height="1.6" fill="#1a20f0"/><rect x="4" y="17.0" width="8" height="1.6" fill="#1a20f0"/><path d="M19.5 2.5 Q22 1 22.5 4 V20 Q22 23 19.5 21.5 M19.5 8 V17 M17.5 14.5 L19.5 18 L21.5 14.5" fill="none" stroke="#1a20f0" stroke-width="1.4"/></svg>
<svg style="left:121px;top:231px;" width="18" height="26" viewBox="0 0 18 26"><path d="M3 3 L13 13 M13 3 L3 13" stroke="#b41808" stroke-width="4.6" stroke-linecap="square"/><path d="M5 3 L3 5 M13 11 L11 13" stroke="#b41808" stroke-width="2"/><path d="M10 1.5 L13.5 1.5 L13.5 5" stroke="#e89030" stroke-width="1.2" fill="none" opacity="0.8"/><circle cx="9.8" cy="19.8" r="5.4" fill="#12a812"/><circle cx="14.20" cy="19.80" r="2.1" fill="#12a812"/><circle cx="12.91" cy="22.91" r="2.1" fill="#12a812"/><circle cx="9.80" cy="24.20" r="2.1" fill="#12a812"/><circle cx="6.69" cy="22.91" r="2.1" fill="#12a812"/><circle cx="5.40" cy="19.80" r="2.1" fill="#12a812"/><circle cx="6.69" cy="16.69" r="2.1" fill="#12a812"/><circle cx="9.80" cy="15.40" r="2.1" fill="#12a812"/><circle cx="12.91" cy="16.69" r="2.1" fill="#12a812"/></svg>
<svg style="left:137px;top:232px;" width="25" height="25" viewBox="0 0 25 25"><g transform="translate(12.3,12)"><circle r="9" fill="#8e98c8"/><rect x="-2.3" y="-11.6" width="4.6" height="5" fill="#8e98c8" transform="rotate(0)"/><rect x="-2.3" y="-11.6" width="4.6" height="5" fill="#8e98c8" transform="rotate(40)"/><rect x="-2.3" y="-11.6" width="4.6" height="5" fill="#8e98c8" transform="rotate(80)"/><rect x="-2.3" y="-11.6" width="4.6" height="5" fill="#8e98c8" transform="rotate(120)"/><rect x="-2.3" y="-11.6" width="4.6" height="5" fill="#8e98c8" transform="rotate(160)"/><rect x="-2.3" y="-11.6" width="4.6" height="5" fill="#8e98c8" transform="rotate(200)"/><rect x="-2.3" y="-11.6" width="4.6" height="5" fill="#8e98c8" transform="rotate(240)"/><rect x="-2.3" y="-11.6" width="4.6" height="5" fill="#8e98c8" transform="rotate(280)"/><rect x="-2.3" y="-11.6" width="4.6" height="5" fill="#8e98c8" transform="rotate(320)"/><circle r="4.6" fill="#fff"/><circle r="4.6" fill="none" stroke="#6a74a0" stroke-width="1"/></g></svg>
<svg style="left:154px;top:270px;" width="14" height="14" viewBox="0 0 14 14"><circle cx="7" cy="7" r="5.4" fill="#12a812"/><circle cx="11.40" cy="7.00" r="2.1" fill="#12a812"/><circle cx="10.11" cy="10.11" r="2.1" fill="#12a812"/><circle cx="7.00" cy="11.40" r="2.1" fill="#12a812"/><circle cx="3.89" cy="10.11" r="2.1" fill="#12a812"/><circle cx="2.60" cy="7.00" r="2.1" fill="#12a812"/><circle cx="3.89" cy="3.89" r="2.1" fill="#12a812"/><circle cx="7.00" cy="2.60" r="2.1" fill="#12a812"/><circle cx="10.11" cy="3.89" r="2.1" fill="#12a812"/></svg>
<svg style="left:168px;top:259px;" width="24" height="25" viewBox="0 0 24 25"><ellipse cx="12" cy="13" rx="10" ry="10.5" fill="#1848c8"/><path d="M5 8 Q9 3 14 5 Q12 10 7 11Z M13 13 Q17 11 20 15 Q16 20 13 17Z" fill="#30b840"/><ellipse cx="12" cy="13" rx="11" ry="5.5" fill="none" stroke="#58a8f0" stroke-width="1.8" transform="rotate(-40 12 13)"/><ellipse cx="9" cy="8" rx="4" ry="2.5" fill="#b0d8ff" opacity="0.6"/></svg>
<svg style="left:154px;top:300px;" width="13" height="13" viewBox="0 0 13 13"><rect x="1.5" y="1.5" width="10" height="10" fill="#fff" stroke="#e08a28" stroke-width="3"/></svg>
<svg style="left:167px;top:288px;" width="25" height="25" viewBox="0 0 25 25"><rect x="1.5" y="8" width="5" height="15.5" fill="#3a90d8" stroke="#111" stroke-width="1.3"/><rect x="6.5" y="9" width="7" height="14.5" fill="#b81a10" stroke="#111" stroke-width="1.3"/><path d="M13.5 5.5 L18 3 L23 5.5 V20 L19 23.5 H13.5Z" fill="#e8922e" stroke="#111" stroke-width="1.3"/><path d="M18 5 V22 M20.5 5 V21" stroke="#ffcc80" stroke-width="1"/><path d="M2 7 L8 1 L11 3.5 L5.5 9Z" fill="#60b0f0" stroke="#111" stroke-width="1"/><path d="M8 9 L12 6 L14 8" fill="#c02010" stroke="#111" stroke-width="0.8"/></svg>
<svg style="left:154px;top:327px;" width="14" height="14" viewBox="0 0 14 14"><circle cx="7" cy="7" r="5.4" fill="#12a812"/><circle cx="11.40" cy="7.00" r="2.1" fill="#12a812"/><circle cx="10.11" cy="10.11" r="2.1" fill="#12a812"/><circle cx="7.00" cy="11.40" r="2.1" fill="#12a812"/><circle cx="3.89" cy="10.11" r="2.1" fill="#12a812"/><circle cx="2.60" cy="7.00" r="2.1" fill="#12a812"/><circle cx="3.89" cy="3.89" r="2.1" fill="#12a812"/><circle cx="7.00" cy="2.60" r="2.1" fill="#12a812"/><circle cx="10.11" cy="3.89" r="2.1" fill="#12a812"/></svg>
<svg style="left:169px;top:317px;" width="20" height="24" viewBox="0 0 20 24"><path d="M1.5 1.5 H14 L18.5 6 V22.5 H1.5 Z" fill="url(#pgg)" stroke="#2a2a2a" stroke-width="1.8"/><path d="M14 1.5 V6 H18.5" fill="none" stroke="#555" stroke-width="1"/><rect x="5" y="7.0" width="9" height="1.6" fill="#1a20f0"/><rect x="5" y="10.0" width="9" height="1.6" fill="#1a20f0"/><rect x="5" y="13.0" width="9" height="1.6" fill="#1a20f0"/><rect x="5" y="16.0" width="9" height="1.6" fill="#1a20f0"/><rect x="5" y="19.0" width="9" height="1.6" fill="#1a20f0"/></svg>
<svg style="left:155px;top:357px;" width="13" height="13" viewBox="0 0 13 13"><rect x="0" y="0" width="12.5" height="12.5" fill="#e08a28"/><path d="M4.5 1.5 h3.5 v3 h3 v3.5 h-3 v3 h-3.5 v-3 h-3 v-3.5 h3z" fill="#0010d8"/></svg>
<svg style="left:169px;top:346px;" width="20" height="24" viewBox="0 0 20 24"><path d="M1.5 1.5 H14 L18.5 6 V22.5 H1.5 Z" fill="url(#pgg)" stroke="#2a2a2a" stroke-width="1.8"/><path d="M14 1.5 V6 H18.5" fill="none" stroke="#555" stroke-width="1"/><rect x="5" y="7.0" width="9" height="1.6" fill="#1a20f0"/><rect x="5" y="10.0" width="9" height="1.6" fill="#1a20f0"/><rect x="5" y="13.0" width="9" height="1.6" fill="#1a20f0"/><rect x="5" y="16.0" width="9" height="1.6" fill="#1a20f0"/><rect x="5" y="19.0" width="9" height="1.6" fill="#1a20f0"/></svg>
<svg style="left:185px;top:386px;" width="12" height="12" viewBox="0 0 12 12"><path d="M3.8 0.5 h4.4 v3.3 h3.3 v4.4 h-3.3 v3.3 h-4.4 v-3.3 h-3.3 v-4.4 h3.3z" fill="#0a10c8"/></svg>
<svg style="left:198px;top:373px;" width="26" height="27" viewBox="0 0 26 27"><path d="M1.5 1.5 H12 L16 5.5 V22.5 H1.5 Z" fill="url(#pgg)" stroke="#2a2a2a" stroke-width="1.6"/><rect x="4" y="6.0" width="8" height="1.6" fill="#1a20f0"/><rect x="4" y="8.8" width="8" height="1.6" fill="#1a20f0"/><rect x="4" y="11.6" width="8" height="1.6" fill="#1a20f0"/><rect x="4" y="14.4" width="8" height="1.6" fill="#1a20f0"/><rect x="4" y="17.2" width="8" height="1.6" fill="#1a20f0"/><text x="17.5" y="25.5" font-family="Liberation Sans" font-weight="bold" font-size="16" fill="#18a818" text-anchor="middle">A</text></svg>
<svg style="left:185px;top:415px;" width="12" height="12" viewBox="0 0 12 12"><path d="M3.8 0.5 h4.4 v3.3 h3.3 v4.4 h-3.3 v3.3 h-4.4 v-3.3 h-3.3 v-4.4 h3.3z" fill="#0a10c8"/></svg>
<svg style="left:198px;top:402px;" width="26" height="27" viewBox="0 0 26 27"><path d="M1.5 1.5 H12 L16 5.5 V22.5 H1.5 Z" fill="url(#pgg)" stroke="#2a2a2a" stroke-width="1.6"/><rect x="4" y="6.0" width="8" height="1.6" fill="#1a20f0"/><rect x="4" y="8.8" width="8" height="1.6" fill="#1a20f0"/><rect x="4" y="11.6" width="8" height="1.6" fill="#1a20f0"/><rect x="4" y="14.4" width="8" height="1.6" fill="#1a20f0"/><rect x="4" y="17.2" width="8" height="1.6" fill="#1a20f0"/><text x="17.5" y="25.5" font-family="Liberation Sans" font-weight="bold" font-size="16" fill="#18a818" text-anchor="middle">A</text></svg>
<svg style="left:185px;top:444px;" width="12" height="12" viewBox="0 0 12 12"><path d="M3.8 0.5 h4.4 v3.3 h3.3 v4.4 h-3.3 v3.3 h-4.4 v-3.3 h-3.3 v-4.4 h3.3z" fill="#0a10c8"/></svg>
<svg style="left:198px;top:431px;" width="26" height="27" viewBox="0 0 26 27"><path d="M1.5 1.5 H12 L16 5.5 V22.5 H1.5 Z" fill="url(#pgg)" stroke="#2a2a2a" stroke-width="1.6"/><rect x="4" y="6.0" width="8" height="1.6" fill="#1a20f0"/><rect x="4" y="8.8" width="8" height="1.6" fill="#1a20f0"/><rect x="4" y="11.6" width="8" height="1.6" fill="#1a20f0"/><rect x="4" y="14.4" width="8" height="1.6" fill="#1a20f0"/><rect x="4" y="17.2" width="8" height="1.6" fill="#1a20f0"/><text x="17.5" y="25.5" font-family="Liberation Sans" font-weight="bold" font-size="16" fill="#18a818" text-anchor="middle">A</text></svg>
<svg style="left:185px;top:472px;" width="12" height="12" viewBox="0 0 12 12"><path d="M3.8 0.5 h4.4 v3.3 h3.3 v4.4 h-3.3 v3.3 h-4.4 v-3.3 h-3.3 v-4.4 h3.3z" fill="#0a10c8"/></svg>
<svg style="left:198px;top:459px;" width="26" height="27" viewBox="0 0 26 27"><path d="M1.5 1.5 H12 L16 5.5 V22.5 H1.5 Z" fill="url(#pgg)" stroke="#2a2a2a" stroke-width="1.6"/><rect x="4" y="6.0" width="8" height="1.6" fill="#1a20f0"/><rect x="4" y="8.8" width="8" height="1.6" fill="#1a20f0"/><rect x="4" y="11.6" width="8" height="1.6" fill="#1a20f0"/><rect x="4" y="14.4" width="8" height="1.6" fill="#1a20f0"/><rect x="4" y="17.2" width="8" height="1.6" fill="#1a20f0"/><text x="17.5" y="25.5" font-family="Liberation Sans" font-weight="bold" font-size="16" fill="#1a20c8" text-anchor="middle">M</text></svg>
<svg style="left:151px;top:488px;" width="18" height="26" viewBox="0 0 18 26"><path d="M3 3 L13 13 M13 3 L3 13" stroke="#b41808" stroke-width="4.6" stroke-linecap="square"/><path d="M5 3 L3 5 M13 11 L11 13" stroke="#b41808" stroke-width="2"/><path d="M10 1.5 L13.5 1.5 L13.5 5" stroke="#e89030" stroke-width="1.2" fill="none" opacity="0.8"/><circle cx="9.8" cy="19.8" r="5.4" fill="#12a812"/><circle cx="14.20" cy="19.80" r="2.1" fill="#12a812"/><circle cx="12.91" cy="22.91" r="2.1" fill="#12a812"/><circle cx="9.80" cy="24.20" r="2.1" fill="#12a812"/><circle cx="6.69" cy="22.91" r="2.1" fill="#12a812"/><circle cx="5.40" cy="19.80" r="2.1" fill="#12a812"/><circle cx="6.69" cy="16.69" r="2.1" fill="#12a812"/><circle cx="9.80" cy="15.40" r="2.1" fill="#12a812"/><circle cx="12.91" cy="16.69" r="2.1" fill="#12a812"/></svg>
<svg style="left:168px;top:488px;" width="24" height="25" viewBox="0 0 24 25"><path d="M2 5 L6 1.5 H22 V19 L18 23 H2 Z" fill="#c8c8c8" stroke="#333" stroke-width="1.1"/><rect x="2" y="5" width="6.5" height="18" fill="#e0e0e0" stroke="#333"/><rect x="8.5" y="5" width="6" height="18" fill="#cacaca" stroke="#333"/><rect x="14.5" y="5" width="5" height="18" fill="#bbb" stroke="#333"/><rect x="4" y="8" width="2" height="2" fill="#10c010"/><rect x="4" y="18" width="2.5" height="2" fill="#222"/><g transform="translate(15,17)"><rect x="-1.4" y="-6.5" width="2.8" height="4" fill="#f0a020" stroke="#7a3000" stroke-width="0.6" transform="rotate(0)"/><rect x="-1.4" y="-6.5" width="2.8" height="4" fill="#f0a020" stroke="#7a3000" stroke-width="0.6" transform="rotate(45)"/><rect x="-1.4" y="-6.5" width="2.8" height="4" fill="#f0a020" stroke="#7a3000" stroke-width="0.6" transform="rotate(90)"/><rect x="-1.4" y="-6.5" width="2.8" height="4" fill="#f0a020" stroke="#7a3000" stroke-width="0.6" transform="rotate(135)"/><rect x="-1.4" y="-6.5" width="2.8" height="4" fill="#f0a020" stroke="#7a3000" stroke-width="0.6" transform="rotate(180)"/><rect x="-1.4" y="-6.5" width="2.8" height="4" fill="#f0a020" stroke="#7a3000" stroke-width="0.6" transform="rotate(225)"/><rect x="-1.4" y="-6.5" width="2.8" height="4" fill="#f0a020" stroke="#7a3000" stroke-width="0.6" transform="rotate(270)"/><rect x="-1.4" y="-6.5" width="2.8" height="4" fill="#f0a020" stroke="#7a3000" stroke-width="0.6" transform="rotate(315)"/><circle r="4.2" fill="#f0a020" stroke="#7a3000" stroke-width="1"/><circle r="1.6" fill="#fff"/></g></svg>
<svg style="left:175px;top:518px;" width="22" height="22" viewBox="0 0 22 22"><path d="M4.5 12 A7 7 0 0 1 15.5 5.5" fill="none" stroke="#3cd03c" stroke-width="3.2"/><path d="M12 1.5 L19.5 4 L15.5 10 Z" fill="#3cd03c"/><path d="M17.5 10 A7 7 0 0 1 6.5 16.5" fill="none" stroke="#3cd03c" stroke-width="3.2"/><path d="M10 20.5 L2.5 18 L6.5 12 Z" fill="#3cd03c"/></svg>
<svg style="left:209px;top:529px;" width="13" height="13" viewBox="0 0 13 13"><rect x="0" y="0" width="12.5" height="12.5" fill="#e08a28"/><path d="M4.5 1.5 h3.5 v3 h3 v3.5 h-3 v3 h-3.5 v-3 h-3 v-3.5 h3z" fill="#0010d8"/></svg>
<svg style="left:223px;top:516px;" width="24" height="24" viewBox="0 0 24 24"><path d="M1.5 16 L12 10.5 L22.5 16 L12 21.5Z" fill="#fff" stroke="#222" stroke-width="1.3"/><path d="M1.5 13 L12 7.5 L22.5 13 L12 18.5Z" fill="#fff" stroke="#222" stroke-width="1.3"/><path d="M1.5 10 L12 4.5 L22.5 10 L12 15.5Z" fill="#fff" stroke="#222" stroke-width="1.3"/><path d="M12 0 V9 M8.5 5.5 L12 9.5 L15.5 5.5" fill="none" stroke="#1a3aa8" stroke-width="2.6"/></svg>
<svg style="left:214px;top:546px;" width="36" height="25" viewBox="0 0 36 25"><path d="M0.5 11.5 H10 M5.2 11.5 V22" stroke="#111" stroke-width="1.8" fill="none"/><path d="M13.5 1.5 H29 L33.5 6 V23.5 H13.5Z" fill="url(#pgg)" stroke="#222" stroke-width="1.5"/><rect x="27" y="8.0" width="4" height="1" fill="#777"/><rect x="27" y="10.8" width="4" height="1" fill="#777"/><rect x="27" y="13.6" width="4" height="1" fill="#777"/><rect x="27" y="16.4" width="4" height="1" fill="#777"/><rect x="27" y="19.2" width="4" height="1" fill="#777"/><rect x="19" y="4" width="6" height="7" fill="none" stroke="#c02020" stroke-width="1.6"/><rect x="13" y="11" width="6" height="6" fill="none" stroke="#20b020" stroke-width="1.6"/><rect x="19" y="11" width="6" height="7" fill="none" stroke="#2030c0" stroke-width="1.6"/></svg>
<svg style="left:125px;top:571px;" width="14" height="26" viewBox="0 0 14 26"><rect x="1" y="5" width="5.5" height="5.5" fill="#fff" stroke="#d88028" stroke-width="2"/><rect x="6" y="1" width="5.5" height="5.5" fill="#fff" stroke="#d88028" stroke-width="2"/><path d="M3.8 14 h4.4 v3.3 h3.3 v4.4 h-3.3 v3.3 h-4.4 v-3.3 h-3.3 v-4.4 h3.3z" fill="#0a10c8"/></svg>
<svg style="left:137px;top:574px;" width="25" height="25" viewBox="0 0 25 25"><g transform="translate(12.3,12)"><circle r="9" fill="#8e98c8"/><rect x="-2.3" y="-11.6" width="4.6" height="5" fill="#8e98c8" transform="rotate(0)"/><rect x="-2.3" y="-11.6" width="4.6" height="5" fill="#8e98c8" transform="rotate(40)"/><rect x="-2.3" y="-11.6" width="4.6" height="5" fill="#8e98c8" transform="rotate(80)"/><rect x="-2.3" y="-11.6" width="4.6" height="5" fill="#8e98c8" transform="rotate(120)"/><rect x="-2.3" y="-11.6" width="4.6" height="5" fill="#8e98c8" transform="rotate(160)"/><rect x="-2.3" y="-11.6" width="4.6" height="5" fill="#8e98c8" transform="rotate(200)"/><rect x="-2.3" y="-11.6" width="4.6" height="5" fill="#8e98c8" transform="rotate(240)"/><rect x="-2.3" y="-11.6" width="4.6" height="5" fill="#8e98c8" transform="rotate(280)"/><rect x="-2.3" y="-11.6" width="4.6" height="5" fill="#8e98c8" transform="rotate(320)"/><circle r="4.6" fill="#fff"/><circle r="4.6" fill="none" stroke="#6a74a0" stroke-width="1"/></g></svg>
<svg style="left:156px;top:614px;" width="12" height="12" viewBox="0 0 12 12"><path d="M3.8 0.5 h4.4 v3.3 h3.3 v4.4 h-3.3 v3.3 h-4.4 v-3.3 h-3.3 v-4.4 h3.3z" fill="#0a10c8"/></svg>
<svg style="left:167px;top:602px;" width="25" height="25" viewBox="0 0 25 25"><rect x="1.5" y="8" width="5" height="15.5" fill="#3a90d8" stroke="#111" stroke-width="1.3"/><rect x="6.5" y="9" width="7" height="14.5" fill="#b81a10" stroke="#111" stroke-width="1.3"/><path d="M13.5 5.5 L18 3 L23 5.5 V20 L19 23.5 H13.5Z" fill="#e8922e" stroke="#111" stroke-width="1.3"/><path d="M18 5 V22 M20.5 5 V21" stroke="#ffcc80" stroke-width="1"/><path d="M2 7 L8 1 L11 3.5 L5.5 9Z" fill="#60b0f0" stroke="#111" stroke-width="1"/><path d="M8 9 L12 6 L14 8" fill="#c02010" stroke="#111" stroke-width="0.8"/></svg>
<svg style="left:156px;top:642px;" width="12" height="12" viewBox="0 0 12 12"><path d="M3.8 0.5 h4.4 v3.3 h3.3 v4.4 h-3.3 v3.3 h-4.4 v-3.3 h-3.3 v-4.4 h3.3z" fill="#0a10c8"/></svg>
<svg style="left:169px;top:630px;" width="21" height="25" viewBox="0 0 21 25"><path d="M1.5 24 V2.2 H14.5 L19.5 7.2 V24Z" fill="url(#pgg)"/><path d="M1.5 24 V2.2 H14.5 L19.5 7.2" fill="none" stroke="#8a8a8a" stroke-width="1.4"/><path d="M14.5 6.5 H19.5 V24 H1.5" fill="none" stroke="#1e1e1e" stroke-width="1.6"/><path d="M4.5 14 V21.5 H15 V12.5 H12.5" fill="none" stroke="#0000f0" stroke-width="1.8" stroke-linejoin="round"/><rect x="8.5" y="9" width="3.5" height="10" fill="#a8c8f8" stroke="#0000f0" stroke-width="1.7"/><path d="M3.3 11.2 H7 M3.3 14.2 H7 M3.3 17.2 H7" stroke="#0000f0" stroke-width="1.5"/></svg>
<svg style="left:156px;top:671px;" width="12" height="12" viewBox="0 0 12 12"><path d="M3.8 0.5 h4.4 v3.3 h3.3 v4.4 h-3.3 v3.3 h-4.4 v-3.3 h-3.3 v-4.4 h3.3z" fill="#0a10c8"/></svg>
<svg style="left:167px;top:659px;" width="25" height="25" viewBox="0 0 25 25"><rect x="2" y="1" width="8" height="8" fill="#1010f0"/><path d="M10 5 H14 V17 H17" fill="none" stroke="#999" stroke-width="1.2"/><rect x="17" y="2" width="7.5" height="7" fill="#e0a8f0" stroke="#555" stroke-width="0.8"/><rect x="17" y="13" width="7.5" height="7" fill="#98d8f8" stroke="#555" stroke-width="0.8"/></svg>
<svg style="left:156px;top:685px;" width="14" height="26" viewBox="0 0 14 26"><rect x="1" y="5" width="5.5" height="5.5" fill="#fff" stroke="#d88028" stroke-width="2"/><rect x="6" y="1" width="5.5" height="5.5" fill="#fff" stroke="#d88028" stroke-width="2"/><path d="M3.8 14 h4.4 v3.3 h3.3 v4.4 h-3.3 v3.3 h-4.4 v-3.3 h-3.3 v-4.4 h3.3z" fill="#0a10c8"/></svg>
<svg style="left:168px;top:687px;" width="24" height="25" viewBox="0 0 24 25"><path d="M2 5 L6 1.5 H22 V19 L18 23 H2 Z" fill="#c8c8c8" stroke="#333" stroke-width="1.1"/><rect x="2" y="5" width="6.5" height="18" fill="#e0e0e0" stroke="#333"/><rect x="8.5" y="5" width="6" height="18" fill="#cacaca" stroke="#333"/><rect x="14.5" y="5" width="5" height="18" fill="#bbb" stroke="#333"/><rect x="4" y="8" width="2" height="2" fill="#10c010"/><rect x="4" y="18" width="2.5" height="2" fill="#222"/><g transform="translate(15,17)"><rect x="-1.4" y="-6.5" width="2.8" height="4" fill="#f0a020" stroke="#7a3000" stroke-width="0.6" transform="rotate(0)"/><rect x="-1.4" y="-6.5" width="2.8" height="4" fill="#f0a020" stroke="#7a3000" stroke-width="0.6" transform="rotate(45)"/><rect x="-1.4" y="-6.5" width="2.8" height="4" fill="#f0a020" stroke="#7a3000" stroke-width="0.6" transform="rotate(90)"/><rect x="-1.4" y="-6.5" width="2.8" height="4" fill="#f0a020" stroke="#7a3000" stroke-width="0.6" transform="rotate(135)"/><rect x="-1.4" y="-6.5" width="2.8" height="4" fill="#f0a020" stroke="#7a3000" stroke-width="0.6" transform="rotate(180)"/><rect x="-1.4" y="-6.5" width="2.8" height="4" fill="#f0a020" stroke="#7a3000" stroke-width="0.6" transform="rotate(225)"/><rect x="-1.4" y="-6.5" width="2.8" height="4" fill="#f0a020" stroke="#7a3000" stroke-width="0.6" transform="rotate(270)"/><rect x="-1.4" y="-6.5" width="2.8" height="4" fill="#f0a020" stroke="#7a3000" stroke-width="0.6" transform="rotate(315)"/><circle r="4.2" fill="#f0a020" stroke="#7a3000" stroke-width="1"/><circle r="1.6" fill="#fff"/></g></svg>
<svg style="left:175px;top:718px;" width="22" height="22" viewBox="0 0 22 22"><path d="M4.5 12 A7 7 0 0 1 15.5 5.5" fill="none" stroke="#3cd03c" stroke-width="3.2"/><path d="M12 1.5 L19.5 4 L15.5 10 Z" fill="#3cd03c"/><path d="M17.5 10 A7 7 0 0 1 6.5 16.5" fill="none" stroke="#3cd03c" stroke-width="3.2"/><path d="M10 20.5 L2.5 18 L6.5 12 Z" fill="#3cd03c"/></svg>
<svg style="left:210px;top:729px;" width="12" height="12" viewBox="0 0 12 12"><path d="M3.8 0.5 h4.4 v3.3 h3.3 v4.4 h-3.3 v3.3 h-4.4 v-3.3 h-3.3 v-4.4 h3.3z" fill="#0a10c8"/></svg>
<svg style="left:223px;top:716px;" width="24" height="24" viewBox="0 0 24 24"><path d="M1.5 16 L12 10.5 L22.5 16 L12 21.5Z" fill="#fff" stroke="#222" stroke-width="1.3"/><path d="M1.5 13 L12 7.5 L22.5 13 L12 18.5Z" fill="#fff" stroke="#222" stroke-width="1.3"/><path d="M1.5 10 L12 4.5 L22.5 10 L12 15.5Z" fill="#fff" stroke="#222" stroke-width="1.3"/><path d="M12 0 V9 M8.5 5.5 L12 9.5 L15.5 5.5" fill="none" stroke="#1a3aa8" stroke-width="2.6"/></svg>
<svg style="left:214px;top:745px;" width="36" height="25" viewBox="0 0 36 25"><path d="M0.5 11.5 H10 M5.2 11.5 V22" stroke="#111" stroke-width="1.8" fill="none"/><path d="M13.5 1.5 H29 L33.5 6 V23.5 H13.5Z" fill="url(#pgg)" stroke="#222" stroke-width="1.5"/><rect x="27" y="8.0" width="4" height="1" fill="#777"/><rect x="27" y="10.8" width="4" height="1" fill="#777"/><rect x="27" y="13.6" width="4" height="1" fill="#777"/><rect x="27" y="16.4" width="4" height="1" fill="#777"/><rect x="27" y="19.2" width="4" height="1" fill="#777"/><rect x="19" y="4" width="6" height="7" fill="none" stroke="#c02020" stroke-width="1.6"/><rect x="13" y="11" width="6" height="6" fill="none" stroke="#20b020" stroke-width="1.6"/><rect x="19" y="11" width="6" height="7" fill="none" stroke="#2030c0" stroke-width="1.6"/></svg>
<div class="t" style="left:80px;top:151.75px;font-size:16px;color:#000;font-style:italic;transform:scale(1.0148,1.0);transform-origin:0 13.55px;">mqttsparkplugb-example-branch</div>
<div class="t" style="left:134px;top:180.27px;font-size:16px;color:#000;transform:scale(0.9866,1.0);transform-origin:0 13.55px;">Device [connected] (CODESYS Control Win V3 x64)</div>
<div class="t" style="left:139.5px;top:208.79px;font-size:16px;color:#000;transform:scale(0.9137,1.0);transform-origin:0 13.55px;">PLC Logic</div>
<div class="t" style="left:171px;top:237.31px;font-size:16px;color:#000;font-weight:700;transform:scale(1.1008,1.0);transform-origin:0 13.55px;">Application [run]</div>
<div class="t" style="left:200px;top:265.83px;font-size:16px;color:#000;transform:scale(0.9501,1.0);transform-origin:0 13.55px;">SparkPlugBSimpleTypes</div>
<div class="t" style="left:200px;top:294.35px;font-size:16px;color:#000;transform:scale(0.9925,1.0);transform-origin:0 13.55px;">Library Manager</div>
<div class="t" style="left:200px;top:322.87px;font-size:16px;color:#000;transform:scale(0.9832,1.0);transform-origin:0 13.55px;">ChangingString (FB)</div>
<div class="t" style="left:200px;top:351.39px;font-size:16px;color:#000;transform:scale(0.9790,1.0);transform-origin:0 13.55px;">EdgeOfNetwork (PRG)</div>
<svg style="left:200px;top:365px;" width="164" height="5" viewBox="0 0 164 5"><path d="M0 4 L2.3 1 L4.6 4 L6.9 1 L9.2 4 L11.5 1 L13.8 4 L16.1 1 L18.4 4 L20.7 1 L23.0 4 L25.3 1 L27.6 4 L29.9 1 L32.2 4 L34.5 1 L36.8 4 L39.1 1 L41.4 4 L43.7 1 L46.0 4 L48.3 1 L50.6 4 L52.9 1 L55.2 4 L57.5 1 L59.8 4 L62.1 1 L64.4 4 L66.7 1 L69.0 4 L71.3 1 L73.6 4 L75.9 1 L78.2 4 L80.5 1 L82.8 4 L85.1 1 L87.4 4 L89.7 1 L92.0 4 L94.3 1 L96.6 4 L98.9 1 L101.2 4 L103.5 1 L105.8 4 L108.1 1 L110.4 4 L112.7 1 L115.0 4 L117.3 1 L119.6 4 L121.9 1 L124.2 4 L126.5 1 L128.8 4 L131.1 1 L133.4 4 L135.7 1 L138.0 4 L140.3 1 L142.6 4 L144.9 1 L147.2 4 L149.5 1 L151.8 4 L154.1 1 L156.4 4 L158.7 1 L161.0 4 L163.3 1" fill="none" stroke="#4848f8" stroke-width="1"/></svg>
<div class="t" style="left:229.6px;top:379.91px;font-size:16px;color:#000;transform:scale(1.0011,1.0);transform-origin:0 13.55px;">GenerateDeviceData</div>
<div class="t" style="left:229.6px;top:408.43px;font-size:16px;color:#000;transform:scale(0.9853,1.0);transform-origin:0 13.55px;">GenerateEoNData</div>
<div class="t" style="left:229.6px;top:436.95px;font-size:16px;color:#000;transform:scale(0.9638,1.0);transform-origin:0 13.55px;">Scenario</div>
<div style="left:0;top:458px;width:545px;height:28px;overflow:hidden">
<div class="t" style="left:229.6px;top:7.47px;font-size:16px;transform:scaleX(1.0220);transform-origin:0 0">AdditionalStepsToRegisterAClientCertificate</div></div>
<div class="t" style="left:200.4px;top:493.99px;font-size:16px;color:#000;transform:scale(1.0087,1.0);transform-origin:0 13.55px;">Task Configuration</div>
<div class="t" style="left:253.4px;top:522.51px;font-size:16px;color:#000;transform:scale(1.0090,1.0);transform-origin:0 13.55px;">EdgefNetwork (IEC-Tasks)</div>
<div class="t" style="left:259.3px;top:551.03px;font-size:16px;color:#000;transform:scale(1.0149,1.0);transform-origin:0 13.55px;">EdgeOfNetwork</div>
<div class="t" style="left:170.8px;top:579.55px;font-size:16px;color:#000;transform:scale(1.0101,1.0);transform-origin:0 13.55px;">Application2 [run]</div>
<div class="t" style="left:200px;top:608.07px;font-size:16px;color:#000;transform:scale(0.9925,1.0);transform-origin:0 13.55px;">Library Manager</div>
<div class="t" style="left:200px;top:636.59px;font-size:16px;color:#a0a0a0;transform:scale(0.9605,1.0);transform-origin:0 13.55px;">PrimaryHost (PRG)</div>
<div class="t" style="left:200px;top:665.11px;font-size:16px;color:#000;transform:scale(0.9981,1.0);transform-origin:0 13.55px;">Symbol Configuration</div>
<div class="t" style="left:200.4px;top:693.63px;font-size:16px;color:#000;transform:scale(1.0087,1.0);transform-origin:0 13.55px;">Task Configuration</div>
<div class="t" style="left:254.8px;top:722.15px;font-size:16px;color:#000;transform:scale(0.9961,1.0);transform-origin:0 13.55px;">Task (IEC-Tasks)</div>
<div class="t" style="left:259.3px;top:750.67px;font-size:16px;color:#000;transform:scale(0.9927,1.0);transform-origin:0 13.55px;">PrimaryHost</div>
<div style="left:547px;top:108px;width:6px;height:1297px;background:#f0f0f0;"></div>
<div style="left:553px;top:108px;width:1323px;height:1px;background:#a8a8a8;"></div>
<div style="left:553px;top:108px;width:1px;height:1297px;background:#a0a0a0;"></div>
<div style="left:1875px;top:108px;width:1px;height:1297px;background:#a0a0a0;"></div>
<div style="left:554px;top:109px;width:1321px;height:30px;background:#f0f0f0;"></div>
<div style="left:554px;top:138px;width:1321px;height:1px;background:#a0a0a0;"></div>
<div style="left:554px;top:139px;width:1321px;height:4px;background:#fdfdfd;"></div>
<svg style="left:554px;top:109px;" width="1321" height="31" viewBox="0 0 1321 31"><path d="M5 29.5 L29 4.5 Q30 3.5 32 3.5 H200 Q204 3.5 205 8 V29.5" fill="#f7f7f7" stroke="#a8a8a8" stroke-width="1"/><path d="M206 14 L218 4.5 H336 Q340 3.5 341 8 V18 L327 29.5 H206Z" fill="#f7f7f7" stroke="#a8a8a8" stroke-width="1"/><path d="M326 29.5 L350 4.5 H1008 Q1013 3.5 1013 9 V29.5" fill="#ffffff" stroke="#a8a8a8" stroke-width="1"/><rect x="327" y="29" width="685" height="3" fill="#fff"/></svg>
<svg style="left:583px;top:114px;" width="21" height="25" viewBox="0 0 21 25"><path d="M1.5 24 V2.2 H14.5 L19.5 7.2 V24Z" fill="url(#pgg)"/><path d="M1.5 24 V2.2 H14.5 L19.5 7.2" fill="none" stroke="#8a8a8a" stroke-width="1.4"/><path d="M14.5 6.5 H19.5 V24 H1.5" fill="none" stroke="#1e1e1e" stroke-width="1.6"/><path d="M4.5 14 V21.5 H15 V12.5 H12.5" fill="none" stroke="#0000f0" stroke-width="1.8" stroke-linejoin="round"/><rect x="8.5" y="9" width="3.5" height="10" fill="#a8c8f8" stroke="#0000f0" stroke-width="1.7"/><path d="M3.3 11.2 H7 M3.3 14.2 H7 M3.3 17.2 H7" stroke="#0000f0" stroke-width="1.5"/></svg>
<svg style="left:771px;top:114px;" width="22" height="24" viewBox="0 0 22 24"><path d="M2 5 L6 2 H20 V19 L16 22 H2 Z" fill="#c8c8c8" stroke="#333" stroke-width="1.2"/><rect x="2" y="5" width="7" height="17" fill="#dedede" stroke="#333" stroke-width="1"/><rect x="9" y="5" width="7" height="17" fill="#c4c4c4" stroke="#333" stroke-width="1"/><path d="M16 5 L20 2 V19 L16 22Z" fill="#555"/><rect x="5" y="9" width="2" height="2" fill="#10c010"/><rect x="12" y="8" width="2" height="1.5" fill="#c02020"/></svg>
<svg style="left:903px;top:114px;" width="20" height="24" viewBox="0 0 20 24"><path d="M1.5 1.5 H14 L18.5 6 V22.5 H1.5 Z" fill="url(#pgg)" stroke="#2a2a2a" stroke-width="1.8"/><path d="M14 1.5 V6 H18.5" fill="none" stroke="#555" stroke-width="1"/><rect x="5" y="7.0" width="9" height="1.6" fill="#1a20f0"/><rect x="5" y="10.0" width="9" height="1.6" fill="#1a20f0"/><rect x="5" y="13.0" width="9" height="1.6" fill="#1a20f0"/><rect x="5" y="16.0" width="9" height="1.6" fill="#1a20f0"/><rect x="5" y="19.0" width="9" height="1.6" fill="#1a20f0"/></svg>
<div class="t" style="left:625px;top:118.41px;font-size:17px;color:#000;transform:scale(0.9412,1.0);transform-origin:0 14.39px;">PrimaryHost</div>
<div class="t" style="left:805px;top:118.41px;font-size:17px;color:#000;transform:scale(0.9429,1.0);transform-origin:0 14.39px;">Device</div>
<div class="t" style="left:937px;top:118.41px;font-size:17px;color:#000;font-weight:700;transform:scale(1.0232,1.0);transform-origin:0 14.39px;">FB_PrimaryHost [From SparkplugB MQTT Topic and Payload Definition]</div>
<svg style="left:1546px;top:120px;" width="15" height="15" viewBox="0 0 15 15"><path d="M2.5 2.5 L12.5 12.5 M12.5 2.5 L2.5 12.5" stroke="#000" stroke-width="3"/></svg>
<svg style="left:1854px;top:123px;" width="14" height="9" viewBox="0 0 14 9"><path d="M0 0.5 H14 L7 8Z" fill="#111"/></svg>
<div style="left:555px;top:143px;width:1320px;height:36px;background:#696969;"></div>
<div class="t" style="left:583.5px;top:153.83px;font-size:16.5px;color:#fff;font-weight:700;transform:scale(1.0563,1.0);transform-origin:0 13.97px;">Device.Application2.PrimaryHost.PrimaryHost</div>
<div style="left:555px;top:178px;width:1320px;height:1px;background:#8a8a8a;"></div>
<div style="left:555px;top:179px;width:1255px;height:480px;background:#ffffff;"></div>
<div style="left:553px;top:143px;width:3px;height:543px;background:#8e8e8e;"></div>
<div style="left:558px;top:218px;width:1252px;height:1px;background:#e3e3e3;"></div>
<div style="left:558px;top:247px;width:1252px;height:1px;background:#e3e3e3;"></div>
<div style="left:558px;top:275px;width:1252px;height:1px;background:#e3e3e3;"></div>
<div style="left:558px;top:304px;width:1252px;height:1px;background:#e3e3e3;"></div>
<div style="left:558px;top:332px;width:1252px;height:1px;background:#e3e3e3;"></div>
<div style="left:558px;top:361px;width:1252px;height:1px;background:#e3e3e3;"></div>
<div style="left:558px;top:389px;width:1252px;height:1px;background:#e3e3e3;"></div>
<div style="left:558px;top:418px;width:1252px;height:1px;background:#e3e3e3;"></div>
<div style="left:558px;top:446px;width:1252px;height:1px;background:#e3e3e3;"></div>
<div style="left:558px;top:475px;width:1252px;height:1px;background:#e3e3e3;"></div>
<div style="left:558px;top:503px;width:1252px;height:1px;background:#e3e3e3;"></div>
<div style="left:558px;top:532px;width:1252px;height:1px;background:#e3e3e3;"></div>
<div style="left:558px;top:560px;width:1252px;height:1px;background:#e3e3e3;"></div>
<div style="left:558px;top:589px;width:1252px;height:1px;background:#e3e3e3;"></div>
<div style="left:558px;top:617px;width:1252px;height:1px;background:#e3e3e3;"></div>
<div style="left:558px;top:646px;width:1252px;height:1px;background:#e3e3e3;"></div>
<div style="left:865px;top:182px;width:1px;height:464px;background:#e3e3e3;"></div>
<div style="left:1045px;top:182px;width:1px;height:464px;background:#e3e3e3;"></div>
<div style="left:1630px;top:182px;width:1px;height:464px;background:#e3e3e3;"></div>
<div class="t" style="left:567px;top:191.11px;font-size:17px;color:#000;transform:scale(0.9870,1.1);transform-origin:0 14.39px;">Expression</div>
<div class="t" style="left:874.4px;top:191.11px;font-size:17px;color:#000;transform:scale(0.9767,1.1);transform-origin:0 14.39px;">Type</div>
<div class="t" style="left:1054.2px;top:191.11px;font-size:17px;color:#000;transform:scale(0.9948,1.1);transform-origin:0 14.39px;">Value</div>
<div class="t" style="left:1639.6px;top:191.11px;font-size:17px;color:#000;transform:scale(1.0097,1.1);transform-origin:0 14.39px;">Prepared value</div>
<svg style="left:598px;top:222px;" width="15" height="19" viewBox="0 0 15 19"><path d="M8.4 1.6 L13.4 6.5 L6.6 11.8 L1.3 8.7Z" fill="#2a30f0" stroke="#333" stroke-width="0.9"/><path d="M1.3 8.7 L6.6 11.8 V17.8 L1.3 13.5Z" fill="#a8cce8" stroke="#555" stroke-width="0.9"/><path d="M6.6 11.8 L13.4 6.5 V11 L6.6 17.8Z" fill="#1a1a1a" stroke="#111" stroke-width="0.9"/><circle cx="5.5" cy="8.5" r="0.8" fill="#a090ff"/><circle cx="8" cy="6.3" r="0.8" fill="#a090ff"/><path d="M8.5 13 L11.5 10.5" stroke="#888" stroke-width="1"/></svg>
<div class="t" style="left:623.2px;top:224.15px;font-size:15px;color:#000;transform:scale(1.0748,1.0);transform-origin:0 12.70px;">_MQTT_eError</div>
<div class="t" style="left:871.7px;top:224.15px;font-size:15px;color:#000;transform:scale(0.9773,1.0);transform-origin:0 12.70px;">MQTT_ERROR</div>
<div class="t" style="left:1051.5px;top:224.15px;font-size:15px;color:#000;transform:scale(0.9988,1.0);transform-origin:0 12.70px;">NO_ERROR</div>
<svg style="left:565px;top:254px;" width="14" height="13" viewBox="0 0 14 13"><rect x="0.5" y="0.5" width="13" height="12" rx="2" fill="url(#bxg)" stroke="#a8c8e8"/><rect x="3" y="5.5" width="8" height="2" fill="#111"/><rect x="6" y="2.5" width="2" height="8" fill="#111"/></svg>
<svg style="left:598px;top:251px;" width="15" height="19" viewBox="0 0 15 19"><path d="M8.4 1.6 L13.4 6.5 L6.6 11.8 L1.3 8.7Z" fill="#2a30f0" stroke="#333" stroke-width="0.9"/><path d="M1.3 8.7 L6.6 11.8 V17.8 L1.3 13.5Z" fill="#a8cce8" stroke="#555" stroke-width="0.9"/><path d="M6.6 11.8 L13.4 6.5 V11 L6.6 17.8Z" fill="#1a1a1a" stroke="#111" stroke-width="0.9"/><circle cx="5.5" cy="8.5" r="0.8" fill="#a090ff"/><circle cx="8" cy="6.3" r="0.8" fill="#a090ff"/><path d="M8.5 13 L11.5 10.5" stroke="#888" stroke-width="1"/></svg>
<div class="t" style="left:623.2px;top:252.65px;font-size:15px;color:#000;transform:scale(1.1096,1.0);transform-origin:0 12.70px;">_SparkplugB</div>
<div class="t" style="left:871.7px;top:252.65px;font-size:15px;color:#000;transform:scale(1.0001,1.0);transform-origin:0 12.70px;">FB_SparkplugBSimple</div>
<svg style="left:565px;top:282px;" width="14" height="13" viewBox="0 0 14 13"><rect x="0.5" y="0.5" width="13" height="12" rx="2" fill="url(#bxg)" stroke="#a8c8e8"/><rect x="3" y="5.5" width="8" height="2" fill="#111"/><rect x="6" y="2.5" width="2" height="8" fill="#111"/></svg>
<svg style="left:598px;top:279px;" width="15" height="19" viewBox="0 0 15 19"><path d="M8.4 1.6 L13.4 6.5 L6.6 11.8 L1.3 8.7Z" fill="#2a30f0" stroke="#333" stroke-width="0.9"/><path d="M1.3 8.7 L6.6 11.8 V17.8 L1.3 13.5Z" fill="#a8cce8" stroke="#555" stroke-width="0.9"/><path d="M6.6 11.8 L13.4 6.5 V11 L6.6 17.8Z" fill="#1a1a1a" stroke="#111" stroke-width="0.9"/><circle cx="5.5" cy="8.5" r="0.8" fill="#a090ff"/><circle cx="8" cy="6.3" r="0.8" fill="#a090ff"/><path d="M8.5 13 L11.5 10.5" stroke="#888" stroke-width="1"/></svg>
<div class="t" style="left:623.2px;top:281.15px;font-size:15px;color:#000;transform:scale(1.1294,1.0);transform-origin:0 12.70px;">_AllMetricsList</div>
<div class="t" style="left:871.7px;top:281.15px;font-size:15px;color:#000;transform:scale(0.9788,1.0);transform-origin:0 12.70px;">LIST</div>
<svg style="left:565px;top:311px;" width="14" height="13" viewBox="0 0 14 13"><rect x="0.5" y="0.5" width="13" height="12" rx="2" fill="url(#bxg)" stroke="#a8c8e8"/><rect x="3" y="5.5" width="8" height="2" fill="#111"/><rect x="6" y="2.5" width="2" height="8" fill="#111"/></svg>
<svg style="left:598px;top:308px;" width="15" height="19" viewBox="0 0 15 19"><path d="M8.4 1.6 L13.4 6.5 L6.6 11.8 L1.3 8.7Z" fill="#2a30f0" stroke="#333" stroke-width="0.9"/><path d="M1.3 8.7 L6.6 11.8 V17.8 L1.3 13.5Z" fill="#a8cce8" stroke="#555" stroke-width="0.9"/><path d="M6.6 11.8 L13.4 6.5 V11 L6.6 17.8Z" fill="#1a1a1a" stroke="#111" stroke-width="0.9"/><circle cx="5.5" cy="8.5" r="0.8" fill="#a090ff"/><circle cx="8" cy="6.3" r="0.8" fill="#a090ff"/><path d="M8.5 13 L11.5 10.5" stroke="#888" stroke-width="1"/></svg>
<div class="t" style="left:623.2px;top:309.65px;font-size:15px;color:#000;transform:scale(1.1549,1.0);transform-origin:0 12.70px;">_Blob</div>
<div class="t" style="left:871.7px;top:309.65px;font-size:15px;color:#000;transform:scale(1.1234,1.0);transform-origin:0 12.70px;">ARRAY [0..65535] ...</div>
<svg style="left:598px;top:336px;" width="15" height="19" viewBox="0 0 15 19"><path d="M8.4 1.6 L13.4 6.5 L6.6 11.8 L1.3 8.7Z" fill="#2a30f0" stroke="#333" stroke-width="0.9"/><path d="M1.3 8.7 L6.6 11.8 V17.8 L1.3 13.5Z" fill="#a8cce8" stroke="#555" stroke-width="0.9"/><path d="M6.6 11.8 L13.4 6.5 V11 L6.6 17.8Z" fill="#1a1a1a" stroke="#111" stroke-width="0.9"/><circle cx="5.5" cy="8.5" r="0.8" fill="#a090ff"/><circle cx="8" cy="6.3" r="0.8" fill="#a090ff"/><path d="M8.5 13 L11.5 10.5" stroke="#888" stroke-width="1"/></svg>
<div class="t" style="left:623.2px;top:338.15px;font-size:15px;color:#000;transform:scale(1.1076,1.0);transform-origin:0 12.70px;">_BlobSize</div>
<div class="t" style="left:871.7px;top:338.15px;font-size:15px;color:#000;transform:scale(0.9975,1.0);transform-origin:0 12.70px;">UDINT</div>
<div class="t" style="left:1051.5px;top:338.15px;font-size:15px;color:#000;transform:scale(0.8989,1.0);transform-origin:0 12.70px;">0</div>
<svg style="left:598px;top:365px;" width="15" height="19" viewBox="0 0 15 19"><path d="M8.4 1.6 L13.4 6.5 L6.6 11.8 L1.3 8.7Z" fill="#2a30f0" stroke="#333" stroke-width="0.9"/><path d="M1.3 8.7 L6.6 11.8 V17.8 L1.3 13.5Z" fill="#a8cce8" stroke="#555" stroke-width="0.9"/><path d="M6.6 11.8 L13.4 6.5 V11 L6.6 17.8Z" fill="#1a1a1a" stroke="#111" stroke-width="0.9"/><circle cx="5.5" cy="8.5" r="0.8" fill="#a090ff"/><circle cx="8" cy="6.3" r="0.8" fill="#a090ff"/><path d="M8.5 13 L11.5 10.5" stroke="#888" stroke-width="1"/></svg>
<div class="t" style="left:623.2px;top:366.65px;font-size:15px;color:#000;transform:scale(1.1102,1.0);transform-origin:0 12.70px;">_LastWillQos</div>
<div class="t" style="left:871.7px;top:366.65px;font-size:15px;color:#000;transform:scale(0.9873,1.0);transform-origin:0 12.70px;">MQTT_QOS</div>
<div class="t" style="left:1051.5px;top:366.65px;font-size:15px;color:#000;transform:scale(1.0193,1.0);transform-origin:0 12.70px;">QoS0</div>
<svg style="left:598px;top:393px;" width="15" height="19" viewBox="0 0 15 19"><path d="M8.4 1.6 L13.4 6.5 L6.6 11.8 L1.3 8.7Z" fill="#2a30f0" stroke="#333" stroke-width="0.9"/><path d="M1.3 8.7 L6.6 11.8 V17.8 L1.3 13.5Z" fill="#a8cce8" stroke="#555" stroke-width="0.9"/><path d="M6.6 11.8 L13.4 6.5 V11 L6.6 17.8Z" fill="#1a1a1a" stroke="#111" stroke-width="0.9"/><circle cx="5.5" cy="8.5" r="0.8" fill="#a090ff"/><circle cx="8" cy="6.3" r="0.8" fill="#a090ff"/><path d="M8.5 13 L11.5 10.5" stroke="#888" stroke-width="1"/></svg>
<div class="t" style="left:623.2px;top:395.15px;font-size:15px;color:#000;transform:scale(1.1190,1.0);transform-origin:0 12.70px;">_LastWillRetain</div>
<div class="t" style="left:871.7px;top:395.15px;font-size:15px;color:#000;transform:scale(0.9427,1.0);transform-origin:0 12.70px;">BOOL</div>
<div style="left:1046.5px;top:390.5px;width:55px;height:26.5px;background:#000;"></div>
<div class="t" style="left:1051px;top:394.65px;font-size:16px;color:#fff;transform:scale(0.9432,1.0);transform-origin:0 13.55px;">FALSE</div>
<svg style="left:598px;top:422px;" width="15" height="19" viewBox="0 0 15 19"><path d="M8.4 1.6 L13.4 6.5 L6.6 11.8 L1.3 8.7Z" fill="#2a30f0" stroke="#333" stroke-width="0.9"/><path d="M1.3 8.7 L6.6 11.8 V17.8 L1.3 13.5Z" fill="#a8cce8" stroke="#555" stroke-width="0.9"/><path d="M6.6 11.8 L13.4 6.5 V11 L6.6 17.8Z" fill="#1a1a1a" stroke="#111" stroke-width="0.9"/><circle cx="5.5" cy="8.5" r="0.8" fill="#a090ff"/><circle cx="8" cy="6.3" r="0.8" fill="#a090ff"/><path d="M8.5 13 L11.5 10.5" stroke="#888" stroke-width="1"/></svg>
<div class="t" style="left:623.2px;top:423.65px;font-size:15px;color:#000;transform:scale(1.1527,1.0);transform-origin:0 12.70px;">_LastWillTopic</div>
<div class="t" style="left:871.7px;top:423.65px;font-size:15px;color:#000;transform:scale(1.0344,1.0);transform-origin:0 12.70px;">WSTRING(GC_Spark...</div>
<svg style="left:1051px;top:422px;" width="13" height="7" viewBox="0 0 13 7"><path d="M1 0 V5 M4 0 V5 M8 0 V5 M11 0 V5" stroke="#333" stroke-width="1.3"/></svg>
<svg style="left:565px;top:453px;" width="14" height="13" viewBox="0 0 14 13"><rect x="0.5" y="0.5" width="13" height="12" rx="2" fill="url(#bxg)" stroke="#a8c8e8"/><rect x="3" y="5.5" width="8" height="2" fill="#111"/><rect x="6" y="2.5" width="2" height="8" fill="#111"/></svg>
<svg style="left:598px;top:450px;" width="15" height="19" viewBox="0 0 15 19"><path d="M8.4 1.6 L13.4 6.5 L6.6 11.8 L1.3 8.7Z" fill="#2a30f0" stroke="#333" stroke-width="0.9"/><path d="M1.3 8.7 L6.6 11.8 V17.8 L1.3 13.5Z" fill="#a8cce8" stroke="#555" stroke-width="0.9"/><path d="M6.6 11.8 L13.4 6.5 V11 L6.6 17.8Z" fill="#1a1a1a" stroke="#111" stroke-width="0.9"/><circle cx="5.5" cy="8.5" r="0.8" fill="#a090ff"/><circle cx="8" cy="6.3" r="0.8" fill="#a090ff"/><path d="M8.5 13 L11.5 10.5" stroke="#888" stroke-width="1"/></svg>
<div class="t" style="left:623.2px;top:452.15px;font-size:15px;color:#000;transform:scale(1.0628,1.0);transform-origin:0 12.70px;">_NDEATH</div>
<div class="t" style="left:871.7px;top:452.15px;font-size:15px;color:#000;transform:scale(1.0592,1.0);transform-origin:0 12.70px;">FB_SparkplugUInt64</div>
<svg style="left:565px;top:482px;" width="14" height="13" viewBox="0 0 14 13"><rect x="0.5" y="0.5" width="13" height="12" rx="2" fill="url(#bxg)" stroke="#a8c8e8"/><rect x="3" y="5.5" width="8" height="2" fill="#111"/><rect x="6" y="2.5" width="2" height="8" fill="#111"/></svg>
<svg style="left:598px;top:479px;" width="15" height="19" viewBox="0 0 15 19"><path d="M8.4 1.6 L13.4 6.5 L6.6 11.8 L1.3 8.7Z" fill="#2a30f0" stroke="#333" stroke-width="0.9"/><path d="M1.3 8.7 L6.6 11.8 V17.8 L1.3 13.5Z" fill="#a8cce8" stroke="#555" stroke-width="0.9"/><path d="M6.6 11.8 L13.4 6.5 V11 L6.6 17.8Z" fill="#1a1a1a" stroke="#111" stroke-width="0.9"/><circle cx="5.5" cy="8.5" r="0.8" fill="#a090ff"/><circle cx="8" cy="6.3" r="0.8" fill="#a090ff"/><path d="M8.5 13 L11.5 10.5" stroke="#888" stroke-width="1"/></svg>
<div class="t" style="left:623.2px;top:480.65px;font-size:15px;color:#000;transform:scale(1.0904,1.0);transform-origin:0 12.70px;">_NDEATHPayload</div>
<div class="t" style="left:871.7px;top:480.65px;font-size:15px;color:#000;transform:scale(1.1101,1.0);transform-origin:0 12.70px;">ARRAY [0..255] OF ...</div>
<svg style="left:598px;top:507px;" width="15" height="19" viewBox="0 0 15 19"><path d="M8.4 1.6 L13.4 6.5 L6.6 11.8 L1.3 8.7Z" fill="#2a30f0" stroke="#333" stroke-width="0.9"/><path d="M1.3 8.7 L6.6 11.8 V17.8 L1.3 13.5Z" fill="#a8cce8" stroke="#555" stroke-width="0.9"/><path d="M6.6 11.8 L13.4 6.5 V11 L6.6 17.8Z" fill="#1a1a1a" stroke="#111" stroke-width="0.9"/><circle cx="5.5" cy="8.5" r="0.8" fill="#a090ff"/><circle cx="8" cy="6.3" r="0.8" fill="#a090ff"/><path d="M8.5 13 L11.5 10.5" stroke="#888" stroke-width="1"/></svg>
<div class="t" style="left:623.2px;top:509.15px;font-size:15px;color:#000;transform:scale(1.0739,1.0);transform-origin:0 12.70px;">_NDEATHPayloadSize</div>
<div class="t" style="left:871.7px;top:509.15px;font-size:15px;color:#000;transform:scale(1.0041,1.0);transform-origin:0 12.70px;">UDINT</div>
<div class="t" style="left:1051.5px;top:509.15px;font-size:15px;color:#000;transform:scale(0.8989,1.0);transform-origin:0 12.70px;">0</div>
<svg style="left:565px;top:539px;" width="14" height="13" viewBox="0 0 14 13"><rect x="0.5" y="0.5" width="13" height="12" rx="2" fill="url(#bxg)" stroke="#a8c8e8"/><rect x="3" y="5.5" width="8" height="2" fill="#111"/><rect x="6" y="2.5" width="2" height="8" fill="#111"/></svg>
<svg style="left:598px;top:536px;" width="15" height="19" viewBox="0 0 15 19"><path d="M8.4 1.6 L13.4 6.5 L6.6 11.8 L1.3 8.7Z" fill="#2a30f0" stroke="#333" stroke-width="0.9"/><path d="M1.3 8.7 L6.6 11.8 V17.8 L1.3 13.5Z" fill="#a8cce8" stroke="#555" stroke-width="0.9"/><path d="M6.6 11.8 L13.4 6.5 V11 L6.6 17.8Z" fill="#1a1a1a" stroke="#111" stroke-width="0.9"/><circle cx="5.5" cy="8.5" r="0.8" fill="#a090ff"/><circle cx="8" cy="6.3" r="0.8" fill="#a090ff"/><path d="M8.5 13 L11.5 10.5" stroke="#888" stroke-width="1"/></svg>
<div class="t" style="left:623.2px;top:537.65px;font-size:15px;color:#000;transform:scale(1.0934,1.0);transform-origin:0 12.70px;">_RecvMesg</div>
<div class="t" style="left:871.7px;top:537.65px;font-size:15px;color:#000;transform:scale(0.9980,1.0);transform-origin:0 12.70px;">REFERENCE TO FB_...</div>
<svg style="left:598px;top:564px;" width="15" height="19" viewBox="0 0 15 19"><path d="M8.4 1.6 L13.4 6.5 L6.6 11.8 L1.3 8.7Z" fill="#2a30f0" stroke="#333" stroke-width="0.9"/><path d="M1.3 8.7 L6.6 11.8 V17.8 L1.3 13.5Z" fill="#a8cce8" stroke="#555" stroke-width="0.9"/><path d="M6.6 11.8 L13.4 6.5 V11 L6.6 17.8Z" fill="#1a1a1a" stroke="#111" stroke-width="0.9"/><circle cx="5.5" cy="8.5" r="0.8" fill="#a090ff"/><circle cx="8" cy="6.3" r="0.8" fill="#a090ff"/><path d="M8.5 13 L11.5 10.5" stroke="#888" stroke-width="1"/></svg>
<div class="t" style="left:623.2px;top:566.15px;font-size:15px;color:#000;transform:scale(1.1273,1.0);transform-origin:0 12.70px;">_RecvTopic</div>
<div class="t" style="left:871.7px;top:566.15px;font-size:15px;color:#000;transform:scale(1.0375,1.0);transform-origin:0 12.70px;">WSTRING(GC_Spark...</div>
<div class="t" style="left:1051.5px;top:566.15px;font-size:15px;color:#000;transform:scale(1.1178,1.0);transform-origin:0 12.70px;">"spBv1.0/SparkplugBDevice/DDATA/EdgeOfNetworkNode1/SomeDevice003"</div>
<svg style="left:598px;top:593px;" width="15" height="19" viewBox="0 0 15 19"><path d="M8.4 1.6 L13.4 6.5 L6.6 11.8 L1.3 8.7Z" fill="#2a30f0" stroke="#333" stroke-width="0.9"/><path d="M1.3 8.7 L6.6 11.8 V17.8 L1.3 13.5Z" fill="#a8cce8" stroke="#555" stroke-width="0.9"/><path d="M6.6 11.8 L13.4 6.5 V11 L6.6 17.8Z" fill="#1a1a1a" stroke="#111" stroke-width="0.9"/><circle cx="5.5" cy="8.5" r="0.8" fill="#a090ff"/><circle cx="8" cy="6.3" r="0.8" fill="#a090ff"/><path d="M8.5 13 L11.5 10.5" stroke="#888" stroke-width="1"/></svg>
<div class="t" style="left:623.2px;top:594.65px;font-size:15px;color:#000;transform:scale(1.1432,1.0);transform-origin:0 12.70px;">_Diag</div>
<div class="t" style="left:871.7px;top:594.65px;font-size:15px;color:#000;transform:scale(0.9672,1.0);transform-origin:0 12.70px;">STRING</div>
<svg style="left:1052px;top:592px;" width="7" height="7" viewBox="0 0 7 7"><path d="M1.5 0 V5 M5 0 V5" stroke="#333" stroke-width="1.3"/></svg>
<svg style="left:598px;top:621px;" width="15" height="19" viewBox="0 0 15 19"><path d="M8.4 1.6 L13.4 6.5 L6.6 11.8 L1.3 8.7Z" fill="#2a30f0" stroke="#333" stroke-width="0.9"/><path d="M1.3 8.7 L6.6 11.8 V17.8 L1.3 13.5Z" fill="#a8cce8" stroke="#555" stroke-width="0.9"/><path d="M6.6 11.8 L13.4 6.5 V11 L6.6 17.8Z" fill="#1a1a1a" stroke="#111" stroke-width="0.9"/><circle cx="5.5" cy="8.5" r="0.8" fill="#a090ff"/><circle cx="8" cy="6.3" r="0.8" fill="#a090ff"/><path d="M8.5 13 L11.5 10.5" stroke="#888" stroke-width="1"/></svg>
<div class="t" style="left:623.2px;top:623.15px;font-size:15px;color:#000;transform:scale(1.0136,1.0);transform-origin:0 12.70px;">_POU</div>
<div class="t" style="left:871.7px;top:623.15px;font-size:15px;color:#000;transform:scale(0.9672,1.0);transform-origin:0 12.70px;">STRING</div>
<svg style="left:1052px;top:621px;" width="7" height="7" viewBox="0 0 7 7"><path d="M1.5 0 V5 M5 0 V5" stroke="#333" stroke-width="1.3"/></svg>
<div style="left:1810px;top:179px;width:27px;height:480px;background:#f0f0f0;"></div>
<div style="left:1811px;top:513px;width:22px;height:118px;background:#cdcdcd;"></div>
<svg style="left:1816px;top:190px;" width="14" height="10" viewBox="0 0 14 10"><path d="M2 8 L7 3 L12 8" fill="none" stroke="#606060" stroke-width="2.2"/></svg>
<svg style="left:1816px;top:638px;" width="14" height="10" viewBox="0 0 14 10"><path d="M2 2 L7 7 L12 2" fill="none" stroke="#606060" stroke-width="2.2"/></svg>
<div style="left:556px;top:659px;width:1281px;height:23px;background:#f0f0f0;"></div>
<div style="left:583px;top:660px;width:854px;height:21px;background:#cdcdcd;"></div>
<svg style="left:564px;top:663px;" width="12" height="14" viewBox="0 0 12 14"><path d="M9 2 L4 7 L9 12" fill="none" stroke="#606060" stroke-width="2.2"/></svg>
<svg style="left:1791px;top:663px;" width="12" height="14" viewBox="0 0 12 14"><path d="M3 2 L8 7 L3 12" fill="none" stroke="#606060" stroke-width="2.2"/></svg>
<div style="left:1837px;top:179px;width:38px;height:507px;background:linear-gradient(90deg,#f8f8f6,#e6e4da 50%,#c8c4b0 90%,#a8a8a8);"></div>
<div style="left:1837px;top:179px;width:1px;height:507px;background:#909090;"></div>
<div style="left:1839px;top:180px;width:29px;height:31px;background:#e8eef6;box-sizing:border-box;border:1.5px solid #4a90d0;"></div>
<svg style="left:1843px;top:185px;" width="20" height="20" viewBox="0 0 20 20"><rect x="1" y="1" width="8" height="1.5" fill="#2040ff"/><rect x="3" y="4" width="10" height="1.5" fill="#111"/><rect x="14" y="4" width="3" height="1.5" fill="#111"/><rect x="3" y="7" width="6" height="1.5" fill="#111"/><rect x="3" y="10" width="12" height="1.5" fill="#111"/><rect x="3" y="13" width="14" height="1.5" fill="#30a030"/><rect x="3" y="16" width="10" height="1.5" fill="#111"/><rect x="1" y="19" width="13" height="1.5" fill="#2040ff"/></svg>
<svg style="left:1842px;top:217px;" width="24" height="24" viewBox="0 0 24 24"><rect x="1" y="1" width="21" height="20" fill="#fff" stroke="#111" stroke-width="1.3"/><rect x="1" y="1" width="21" height="3" fill="#1020ff"/><path d="M1 9 H22 M1 14 H22 M8 4 V21 M15 4 V21" stroke="#888" stroke-width="1"/></svg>
<div style="left:554px;top:685px;width:1321px;height:2px;background:#a0a0a0;"></div>
<div style="left:554px;top:687px;width:1321px;height:6px;background:#f0f0f0;"></div>
<svg style="left:1196px;top:685px;" width="40" height="9" viewBox="0 0 40 9"><path d="M1 8 L7 2 L13 8Z" fill="#b8b8b8"/><path d="M25 2 L31 8 L37 2Z" fill="#b8b8b8"/></svg>
<div style="left:554px;top:692px;width:1321px;height:2px;background:#a8a8a8;"></div>
<div style="left:1876px;top:108px;width:11px;height:1297px;background:#f9f9f9;"></div>
<div style="left:1878px;top:112px;width:14px;height:102px;background:transparent;box-sizing:border-box;border:1.5px solid #909090;border-radius:6px;"></div>
<div style="left:1878px;top:237px;width:14px;height:200px;background:transparent;box-sizing:border-box;border:1.5px solid #909090;border-radius:6px;"></div>
<div style="left:1878px;top:457px;width:14px;height:125px;background:transparent;box-sizing:border-box;border:1.5px solid #909090;border-radius:6px;"></div>
<div style="left:555px;top:694px;width:1320px;height:711px;background:#ffffff;"></div>
<div style="left:625px;top:694px;width:3px;height:711px;background:#858585;"></div>
<div style="left:0px;top:1404px;width:1887px;height:1px;background:#b4b4b4;"></div>
<div class="t" style="left:612.5px;top:695.03px;font-size:16.5px;color:#3f86cc;transform:scale(1.0031,1.0);transform-origin:0 13.97px;">1</div>
<div class="t" style="left:612.5px;top:720.83px;font-size:16.5px;color:#3f86cc;transform:scale(1.0031,1.0);transform-origin:0 13.97px;">2</div>
<div class="t" style="left:612.5px;top:746.35px;font-size:16.5px;color:#3f86cc;transform:scale(1.0031,1.0);transform-origin:0 13.97px;">3</div>
<div class="t" style="left:612.5px;top:771.87px;font-size:16.5px;color:#3f86cc;transform:scale(1.0031,1.0);transform-origin:0 13.97px;">4</div>
<div class="t" style="left:612.5px;top:797.39px;font-size:16.5px;color:#3f86cc;transform:scale(1.0031,1.0);transform-origin:0 13.97px;">5</div>
<div class="t" style="left:612.5px;top:822.91px;font-size:16.5px;color:#3f86cc;transform:scale(1.0031,1.0);transform-origin:0 13.97px;">6</div>
<div class="t" style="left:612.5px;top:848.43px;font-size:16.5px;color:#3f86cc;transform:scale(1.0031,1.0);transform-origin:0 13.97px;">7</div>
<div class="t" style="left:612.5px;top:873.95px;font-size:16.5px;color:#3f86cc;transform:scale(1.0031,1.0);transform-origin:0 13.97px;">8</div>
<div class="t" style="left:612.5px;top:899.47px;font-size:16.5px;color:#3f86cc;transform:scale(1.0031,1.0);transform-origin:0 13.97px;">9</div>
<div class="t" style="left:602.5px;top:924.99px;font-size:16.5px;color:#c87a2a;transform:scale(1.0467,1.0);transform-origin:0 13.97px;">10</div>
<div class="t" style="left:602.5px;top:950.51px;font-size:16.5px;color:#3f86cc;transform:scale(1.1212,1.0);transform-origin:0 13.97px;">11</div>
<div class="t" style="left:602.5px;top:976.03px;font-size:16.5px;color:#3f86cc;transform:scale(1.0467,1.0);transform-origin:0 13.97px;">12</div>
<div class="t" style="left:602.5px;top:1001.55px;font-size:16.5px;color:#3f86cc;transform:scale(1.0467,1.0);transform-origin:0 13.97px;">13</div>
<div class="t" style="left:602.5px;top:1027.07px;font-size:16.5px;color:#3f86cc;transform:scale(1.0467,1.0);transform-origin:0 13.97px;">14</div>
<div class="t" style="left:602.5px;top:1052.59px;font-size:16.5px;color:#3f86cc;transform:scale(1.0467,1.0);transform-origin:0 13.97px;">15</div>
<div class="t" style="left:602.5px;top:1078.11px;font-size:16.5px;color:#3f86cc;transform:scale(1.0467,1.0);transform-origin:0 13.97px;">16</div>
<div class="t" style="left:602.5px;top:1103.63px;font-size:16.5px;color:#3f86cc;transform:scale(1.0467,1.0);transform-origin:0 13.97px;">17</div>
<div class="t" style="left:602.5px;top:1129.15px;font-size:16.5px;color:#3f86cc;transform:scale(1.0467,1.0);transform-origin:0 13.97px;">18</div>
<div class="t" style="left:602.5px;top:1154.67px;font-size:16.5px;color:#3f86cc;transform:scale(1.0467,1.0);transform-origin:0 13.97px;">19</div>
<div class="t" style="left:602.5px;top:1180.19px;font-size:16.5px;color:#3f86cc;transform:scale(1.0467,1.0);transform-origin:0 13.97px;">20</div>
<div class="t" style="left:602.5px;top:1205.71px;font-size:16.5px;color:#3f86cc;transform:scale(1.0467,1.0);transform-origin:0 13.97px;">21</div>
<div class="t" style="left:602.5px;top:1231.23px;font-size:16.5px;color:#3f86cc;transform:scale(1.0467,1.0);transform-origin:0 13.97px;">22</div>
<div class="t" style="left:602.5px;top:1256.75px;font-size:16.5px;color:#3f86cc;transform:scale(1.0467,1.0);transform-origin:0 13.97px;">23</div>
<div class="t" style="left:602.5px;top:1282.27px;font-size:16.5px;color:#3f86cc;transform:scale(1.0467,1.0);transform-origin:0 13.97px;">24</div>
<div class="t" style="left:602.5px;top:1307.79px;font-size:16.5px;color:#3f86cc;transform:scale(1.0467,1.0);transform-origin:0 13.97px;">25</div>
<div class="t" style="left:602.5px;top:1333.31px;font-size:16.5px;color:#3f86cc;transform:scale(1.0467,1.0);transform-origin:0 13.97px;">26</div>
<div class="t" style="left:602.5px;top:1358.83px;font-size:16.5px;color:#3f86cc;transform:scale(1.0467,1.0);transform-origin:0 13.97px;">27</div>
<div class="t" style="left:602.5px;top:1384.35px;font-size:16.5px;color:#3f86cc;transform:scale(1.0467,1.0);transform-origin:0 13.97px;">28</div>
<svg style="left:633px;top:726px;" width="15" height="15" viewBox="0 0 15 15"><circle cx="7.5" cy="7.5" r="6.8" fill="#d3d3d3"/></svg>
<svg style="left:633px;top:751px;" width="15" height="15" viewBox="0 0 15 15"><circle cx="7.5" cy="7.5" r="6.8" fill="#d3d3d3"/></svg>
<svg style="left:633px;top:777px;" width="15" height="15" viewBox="0 0 15 15"><circle cx="7.5" cy="7.5" r="6.8" fill="#d3d3d3"/></svg>
<svg style="left:633px;top:802px;" width="15" height="15" viewBox="0 0 15 15"><circle cx="7.5" cy="7.5" r="6.8" fill="#d3d3d3"/></svg>
<svg style="left:633px;top:853px;" width="15" height="15" viewBox="0 0 15 15"><circle cx="7.5" cy="7.5" r="6.8" fill="#d3d3d3"/></svg>
<svg style="left:633px;top:904px;" width="15" height="15" viewBox="0 0 15 15"><circle cx="7.5" cy="7.5" r="6.8" fill="#d3d3d3"/></svg>
<svg style="left:633px;top:930px;" width="15" height="15" viewBox="0 0 15 15"><circle cx="7.5" cy="7.5" r="6.8" fill="#d3d3d3"/></svg>
<svg style="left:633px;top:955px;" width="15" height="15" viewBox="0 0 15 15"><circle cx="7.5" cy="7.5" r="6.8" fill="#d3d3d3"/></svg>
<svg style="left:633px;top:1057px;" width="15" height="15" viewBox="0 0 15 15"><circle cx="7.5" cy="7.5" r="6.8" fill="#d3d3d3"/></svg>
<svg style="left:633px;top:1236px;" width="15" height="15" viewBox="0 0 15 15"><circle cx="7.5" cy="7.5" r="6.8" fill="#d3d3d3"/></svg>
<svg style="left:557px;top:907px;" width="15" height="14" viewBox="0 0 15 14"><rect x="1" y="1" width="12" height="12" fill="#fff" stroke="#3a6ea8" stroke-width="1.6"/><path d="M1 7 H13" stroke="#3a6ea8" stroke-width="1.6"/></svg>
<svg style="left:557px;top:958px;" width="15" height="14" viewBox="0 0 15 14"><rect x="1" y="1" width="12" height="12" fill="#fff" stroke="#3a6ea8" stroke-width="1.6"/><path d="M1 7 H13" stroke="#3a6ea8" stroke-width="1.6"/></svg>
<svg style="left:557px;top:1060px;" width="15" height="14" viewBox="0 0 15 14"><rect x="1" y="1" width="12" height="12" fill="#fff" stroke="#3a6ea8" stroke-width="1.6"/><path d="M1 7 H13" stroke="#3a6ea8" stroke-width="1.6"/></svg>
<svg style="left:557px;top:1238px;" width="15" height="14" viewBox="0 0 15 14"><rect x="1" y="1" width="12" height="12" fill="#fff" stroke="#3a6ea8" stroke-width="1.6"/><path d="M1 7 H13" stroke="#3a6ea8" stroke-width="1.6"/></svg>
<div class="t" style="left:662px;top:696.19px;font-size:17.5px;color:#3f8ed0;font-style:italic;font-family:'Liberation Mono',monospace;transform:scaleY(1.12);transform-origin:0 13.41px;">// Components</div>
<div class="t" style="left:662px;top:723.59px;font-size:17.5px;color:#101010;font-family:'Liberation Mono',monospace;transform:scaleY(1.12);transform-origin:0 13.41px;">_MQTT</div>
<div class="t" style="left:714.5px;top:723.59px;font-size:17.5px;color:#3c3cff;font-family:'Liberation Mono',monospace;transform:scaleY(1.12);transform-origin:0 13.41px;">.</div>
<div class="t" style="left:725.0px;top:723.59px;font-size:17.5px;color:#101010;font-family:'Liberation Mono',monospace;transform:scaleY(1.12);transform-origin:0 13.41px;">IASyncPropertyProvider</div>
<div class="t" style="left:956.0px;top:723.59px;font-size:17.5px;color:#3c3cff;font-family:'Liberation Mono',monospace;transform:scaleY(1.12);transform-origin:0 13.41px;">( </div>
<div class="t" style="left:977.0px;top:723.59px;font-size:17.5px;color:#101010;font-family:'Liberation Mono',monospace;transform:scaleY(1.12);transform-origin:0 13.41px;">IASyncPropertyProvider </div>
<div class="t" style="left:1218.5px;top:723.59px;font-size:17.5px;color:#3c3cff;font-family:'Liberation Mono',monospace;transform:scaleY(1.12);transform-origin:0 13.41px;">);</div>
<div class="t" style="left:662px;top:749.11px;font-size:17.5px;color:#101010;font-family:'Liberation Mono',monospace;transform:scaleY(1.12);transform-origin:0 13.41px;">_MQTT</div>
<div class="t" style="left:714.5px;top:749.11px;font-size:17.5px;color:#3c3cff;font-family:'Liberation Mono',monospace;transform:scaleY(1.12);transform-origin:0 13.41px;">.</div>
<div class="t" style="left:725.0px;top:749.11px;font-size:17.5px;color:#101010;font-family:'Liberation Mono',monospace;transform:scaleY(1.12);transform-origin:0 13.41px;">ITLSContextProvider</div>
<div class="t" style="left:924.5px;top:749.11px;font-size:17.5px;color:#3c3cff;font-family:'Liberation Mono',monospace;transform:scaleY(1.12);transform-origin:0 13.41px;">( </div>
<div class="t" style="left:945.5px;top:749.11px;font-size:17.5px;color:#101010;font-family:'Liberation Mono',monospace;transform:scaleY(1.12);transform-origin:0 13.41px;">ITLSContextProvider </div>
<div class="t" style="left:1155.5px;top:749.11px;font-size:17.5px;color:#3c3cff;font-family:'Liberation Mono',monospace;transform:scaleY(1.12);transform-origin:0 13.41px;">);</div>
<div class="t" style="left:662px;top:774.63px;font-size:17.5px;color:#101010;font-family:'Liberation Mono',monospace;transform:scaleY(1.12);transform-origin:0 13.41px;">_MQTT</div>
<div class="t" style="left:714.5px;top:774.63px;font-size:17.5px;color:#3c3cff;font-family:'Liberation Mono',monospace;transform:scaleY(1.12);transform-origin:0 13.41px;">();</div>
<div class="t" style="left:662px;top:800.15px;font-size:17.5px;color:#101010;font-family:'Liberation Mono',monospace;transform:scaleY(1.12);transform-origin:0 13.41px;">Connected</div>
<div style="left:757.0px;top:800.9599999999999px;width:52px;height:16.2px;background:#0000ff;"></div>
<div class="t" style="left:763.65px;top:801.56px;font-size:15px;color:#fff;transform:scale(0.9482,1.0);transform-origin:0 12.70px;">TRUE</div>
<div class="t" style="left:820.0px;top:800.15px;font-size:17.5px;color:#3c3cff;font-family:'Liberation Mono',monospace;transform:scaleY(1.12);transform-origin:0 13.41px;">:= (</div>
<div class="t" style="left:862.0px;top:800.15px;font-size:17.5px;color:#0000d8;font-weight:700;font-family:'Liberation Mono',monospace;transform:scaleY(1.12);transform-origin:0 13.41px;">NOT </div>
<div class="t" style="left:904.0px;top:800.15px;font-size:17.5px;color:#101010;font-family:'Liberation Mono',monospace;transform:scaleY(1.12);transform-origin:0 13.41px;">_MQTT</div>
<div class="t" style="left:956.5px;top:800.15px;font-size:17.5px;color:#3c3cff;font-family:'Liberation Mono',monospace;transform:scaleY(1.12);transform-origin:0 13.41px;">.</div>
<div class="t" style="left:967.0px;top:800.15px;font-size:17.5px;color:#101010;font-family:'Liberation Mono',monospace;transform:scaleY(1.12);transform-origin:0 13.41px;">ClientError</div>
<div class="t" style="left:1082.5px;top:800.15px;font-size:17.5px;color:#3c3cff;font-family:'Liberation Mono',monospace;transform:scaleY(1.12);transform-origin:0 13.41px;">() </div>
<div class="t" style="left:1114.0px;top:800.15px;font-size:17.5px;color:#0000d8;font-weight:700;font-family:'Liberation Mono',monospace;transform:scaleY(1.12);transform-origin:0 13.41px;">AND NOT </div>
<div class="t" style="left:1198.0px;top:800.15px;font-size:17.5px;color:#101010;font-family:'Liberation Mono',monospace;transform:scaleY(1.12);transform-origin:0 13.41px;">_MQTT</div>
<div class="t" style="left:1250.5px;top:800.15px;font-size:17.5px;color:#3c3cff;font-family:'Liberation Mono',monospace;transform:scaleY(1.12);transform-origin:0 13.41px;">.</div>
<div class="t" style="left:1261.0px;top:800.15px;font-size:17.5px;color:#101010;font-family:'Liberation Mono',monospace;transform:scaleY(1.12);transform-origin:0 13.41px;">IsConnecting</div>
<div class="t" style="left:1387.0px;top:800.15px;font-size:17.5px;color:#3c3cff;font-family:'Liberation Mono',monospace;transform:scaleY(1.12);transform-origin:0 13.41px;">() </div>
<div class="t" style="left:1418.5px;top:800.15px;font-size:17.5px;color:#0000d8;font-weight:700;font-family:'Liberation Mono',monospace;transform:scaleY(1.12);transform-origin:0 13.41px;">AND </div>
<div class="t" style="left:1460.5px;top:800.15px;font-size:17.5px;color:#101010;font-family:'Liberation Mono',monospace;transform:scaleY(1.12);transform-origin:0 13.41px;">_MQTT</div>
<div class="t" style="left:1513.0px;top:800.15px;font-size:17.5px;color:#3c3cff;font-family:'Liberation Mono',monospace;transform:scaleY(1.12);transform-origin:0 13.41px;">.</div>
<div class="t" style="left:1523.5px;top:800.15px;font-size:17.5px;color:#101010;font-family:'Liberation Mono',monospace;transform:scaleY(1.12);transform-origin:0 13.41px;">IsConnected</div>
<div class="t" style="left:1639.0px;top:800.15px;font-size:17.5px;color:#3c3cff;font-family:'Liberation Mono',monospace;transform:scaleY(1.12);transform-origin:0 13.41px;">());</div>
<div class="t" style="left:662px;top:851.19px;font-size:17.5px;color:#101010;font-family:'Liberation Mono',monospace;transform:scaleY(1.12);transform-origin:0 13.41px;">_SparkplugB</div>
<div class="t" style="left:777.5px;top:851.19px;font-size:17.5px;color:#3c3cff;font-family:'Liberation Mono',monospace;transform:scaleY(1.12);transform-origin:0 13.41px;">( </div>
<div class="t" style="left:798.5px;top:851.19px;font-size:17.5px;color:#101010;font-family:'Liberation Mono',monospace;transform:scaleY(1.12);transform-origin:0 13.41px;">AllmetricsList </div>
<div class="t" style="left:956.0px;top:851.19px;font-size:17.5px;color:#3c3cff;font-family:'Liberation Mono',monospace;transform:scaleY(1.12);transform-origin:0 13.41px;">:= </div>
<div class="t" style="left:987.5px;top:851.19px;font-size:17.5px;color:#101010;font-family:'Liberation Mono',monospace;transform:scaleY(1.12);transform-origin:0 13.41px;">_AllMetricsList </div>
<div class="t" style="left:1155.5px;top:851.19px;font-size:17.5px;color:#3c3cff;font-family:'Liberation Mono',monospace;transform:scaleY(1.12);transform-origin:0 13.41px;">);</div>
<div class="t" style="left:662px;top:902.23px;font-size:17.5px;color:#0000d8;font-weight:700;font-family:'Liberation Mono',monospace;transform:scaleY(1.12);transform-origin:0 13.41px;">IF </div>
<div class="t" style="left:693.5px;top:902.23px;font-size:17.5px;color:#101010;font-family:'Liberation Mono',monospace;transform:scaleY(1.12);transform-origin:0 13.41px;">_MQTT</div>
<div class="t" style="left:746.0px;top:902.23px;font-size:17.5px;color:#3c3cff;font-family:'Liberation Mono',monospace;transform:scaleY(1.12);transform-origin:0 13.41px;">.</div>
<div class="t" style="left:756.5px;top:902.23px;font-size:17.5px;color:#101010;font-family:'Liberation Mono',monospace;transform:scaleY(1.12);transform-origin:0 13.41px;">SubscriberMessageReceived</div>
<div class="t" style="left:1019.0px;top:902.23px;font-size:17.5px;color:#3c3cff;font-family:'Liberation Mono',monospace;transform:scaleY(1.12);transform-origin:0 13.41px;">() </div>
<div class="t" style="left:1050.5px;top:902.23px;font-size:17.5px;color:#0000d8;font-weight:700;font-family:'Liberation Mono',monospace;transform:scaleY(1.12);transform-origin:0 13.41px;">THEN</div>
<div class="t" style="left:662px;top:927.75px;font-size:17.5px;color:#101010;font-family:'Liberation Mono',monospace;transform:scaleY(1.12);transform-origin:0 13.41px;">    _RecvMesg </div>
<div class="t" style="left:809.0px;top:927.75px;font-size:17.5px;color:#0000d8;font-weight:700;font-family:'Liberation Mono',monospace;transform:scaleY(1.12);transform-origin:0 13.41px;">REF= </div>
<div class="t" style="left:861.5px;top:927.75px;font-size:17.5px;color:#101010;font-family:'Liberation Mono',monospace;transform:scaleY(1.12);transform-origin:0 13.41px;">_MQTT</div>
<div class="t" style="left:914.0px;top:927.75px;font-size:17.5px;color:#3c3cff;font-family:'Liberation Mono',monospace;transform:scaleY(1.12);transform-origin:0 13.41px;">.</div>
<div class="t" style="left:924.5px;top:927.75px;font-size:17.5px;color:#101010;font-family:'Liberation Mono',monospace;transform:scaleY(1.12);transform-origin:0 13.41px;">GetSubscriberMessage</div>
<div class="t" style="left:1134.5px;top:927.75px;font-size:17.5px;color:#3c3cff;font-family:'Liberation Mono',monospace;transform:scaleY(1.12);transform-origin:0 13.41px;">( </div>
<div class="t" style="left:1155.5px;top:927.75px;font-size:17.5px;color:#101010;font-family:'Liberation Mono',monospace;transform:scaleY(1.12);transform-origin:0 13.41px;">MessageTopic </div>
<svg style="left:1293px;top:929px;" width="21" height="14" viewBox="0 0 21 14"><path d="M2 4.5 H15 M2 9.5 H15 M11 1 L18 7 L11 13" fill="none" stroke="#3c3cff" stroke-width="1.8"/></svg>
<div class="t" style="left:1313.0px;top:927.75px;font-size:17.5px;color:#101010;font-family:'Liberation Mono',monospace;transform:scaleY(1.12);transform-origin:0 13.41px;"> _RecvTopic</div>
<div style="left:1427.2px;top:926.9599999999999px;width:127.5px;height:19.7px;background:#fdd9b5;box-sizing:border-box;border:1.7px solid #b06a26;"></div>
<div class="t" style="left:1443.7px;top:930.08px;font-size:14.5px;color:#111;transform:scale(0.9710,1.0);transform-origin:0 12.28px;">"spBv1.0/Sp</div>
<svg style="left:1535px;top:932px;" width="8" height="11" viewBox="0 0 8 11"><path d="M1 0 L7 5.5 L1 11Z" fill="#7a3a00"/></svg>
<div class="t" style="left:1563.5px;top:927.75px;font-size:17.5px;color:#3c3cff;font-family:'Liberation Mono',monospace;transform:scaleY(1.12);transform-origin:0 13.41px;">);</div>
<div class="t" style="left:662px;top:953.27px;font-size:17.5px;color:#101010;font-family:'Liberation Mono',monospace;transform:scaleY(1.12);transform-origin:0 13.41px;">    onSubscribeMessage</div>
<div class="t" style="left:893.0px;top:953.27px;font-size:17.5px;color:#3c3cff;font-family:'Liberation Mono',monospace;transform:scaleY(1.12);transform-origin:0 13.41px;">( </div>
<div class="t" style="left:914.0px;top:953.27px;font-size:17.5px;color:#101010;font-family:'Liberation Mono',monospace;transform:scaleY(1.12);transform-origin:0 13.41px;">pTopic   </div>
<div class="t" style="left:1008.5px;top:953.27px;font-size:17.5px;color:#3c3cff;font-family:'Liberation Mono',monospace;transform:scaleY(1.12);transform-origin:0 13.41px;">:= </div>
<div class="t" style="left:1040.0px;top:953.27px;font-size:17.5px;color:#0000d8;font-weight:700;font-family:'Liberation Mono',monospace;transform:scaleY(1.12);transform-origin:0 13.41px;">ADR</div>
<div class="t" style="left:1071.5px;top:953.27px;font-size:17.5px;color:#3c3cff;font-family:'Liberation Mono',monospace;transform:scaleY(1.12);transform-origin:0 13.41px;">( </div>
<div class="t" style="left:1092.5px;top:953.27px;font-size:17.5px;color:#101010;font-family:'Liberation Mono',monospace;transform:scaleY(1.12);transform-origin:0 13.41px;">_RecvTopic</div>
<div style="left:1196.2px;top:952.48px;width:127.5px;height:19.7px;background:#fdd9b5;box-sizing:border-box;border:1.7px solid #b06a26;"></div>
<div class="t" style="left:1212.7px;top:955.60px;font-size:14.5px;color:#111;transform:scale(0.9710,1.0);transform-origin:0 12.28px;">"spBv1.0/Sp</div>
<svg style="left:1304px;top:958px;" width="8" height="11" viewBox="0 0 8 11"><path d="M1 0 L7 5.5 L1 11Z" fill="#7a3a00"/></svg>
<div class="t" style="left:1332.5px;top:953.27px;font-size:17.5px;color:#3c3cff;font-family:'Liberation Mono',monospace;transform:scaleY(1.12);transform-origin:0 13.41px;">),</div>
<div class="t" style="left:662px;top:978.79px;font-size:17.5px;color:#101010;font-family:'Liberation Mono',monospace;transform:scaleY(1.12);transform-origin:0 13.41px;">                        pMessage </div>
<div class="t" style="left:1008.5px;top:978.79px;font-size:17.5px;color:#3c3cff;font-family:'Liberation Mono',monospace;transform:scaleY(1.12);transform-origin:0 13.41px;">:= </div>
<div class="t" style="left:1040.0px;top:978.79px;font-size:17.5px;color:#101010;font-family:'Liberation Mono',monospace;transform:scaleY(1.12);transform-origin:0 13.41px;">_RecvMesg </div>
<div class="t" style="left:1145.0px;top:978.79px;font-size:17.5px;color:#3c3cff;font-family:'Liberation Mono',monospace;transform:scaleY(1.12);transform-origin:0 13.41px;">);</div>
<div class="t" style="left:662px;top:1004.31px;font-size:17.5px;color:#0000d8;font-weight:700;font-family:'Liberation Mono',monospace;transform:scaleY(1.12);transform-origin:0 13.41px;">END_IF</div>
<div class="t" style="left:662px;top:1055.35px;font-size:17.5px;color:#101010;font-family:'Liberation Mono',monospace;transform:scaleY(1.12);transform-origin:0 13.41px;">_ExponentialBackOff</div>
<div class="t" style="left:861.5px;top:1055.35px;font-size:17.5px;color:#3c3cff;font-family:'Liberation Mono',monospace;transform:scaleY(1.12);transform-origin:0 13.41px;">( </div>
<div class="t" style="left:882.5px;top:1055.35px;font-size:17.5px;color:#101010;font-family:'Liberation Mono',monospace;transform:scaleY(1.12);transform-origin:0 13.41px;">Enable</div>
<div style="left:946.0px;top:1056.16px;width:52px;height:16.2px;background:#000;"></div>
<div class="t" style="left:951.2px;top:1056.76px;font-size:15px;color:#fff;transform:scale(0.8913,1.0);transform-origin:0 12.70px;">FALSE</div>
<div class="t" style="left:1124.5px;top:1055.35px;font-size:17.5px;color:#3c3cff;font-family:'Liberation Mono',monospace;transform:scaleY(1.12);transform-origin:0 13.41px;">:= (</div>
<div class="t" style="left:1166.5px;top:1055.35px;font-size:17.5px;color:#101010;font-family:'Liberation Mono',monospace;transform:scaleY(1.12);transform-origin:0 13.41px;">Connect</div>
<div style="left:1240.5px;top:1056.16px;width:52px;height:16.2px;background:#0000ff;"></div>
<div class="t" style="left:1247.15px;top:1056.76px;font-size:15px;color:#fff;transform:scale(0.9482,1.0);transform-origin:0 12.70px;">TRUE</div>
<div class="t" style="left:1303.5px;top:1055.35px;font-size:17.5px;color:#0000d8;font-weight:700;font-family:'Liberation Mono',monospace;transform:scaleY(1.12);transform-origin:0 13.41px;">AND NOT </div>
<div class="t" style="left:1387.5px;top:1055.35px;font-size:17.5px;color:#101010;font-family:'Liberation Mono',monospace;transform:scaleY(1.12);transform-origin:0 13.41px;">Connected</div>
<div style="left:1482.5px;top:1056.16px;width:52px;height:16.2px;background:#0000ff;"></div>
<div class="t" style="left:1489.15px;top:1056.76px;font-size:15px;color:#fff;transform:scale(0.9482,1.0);transform-origin:0 12.70px;">TRUE</div>
<div class="t" style="left:1535.0px;top:1055.35px;font-size:17.5px;color:#3c3cff;font-family:'Liberation Mono',monospace;transform:scaleY(1.12);transform-origin:0 13.41px;">),</div>
<div class="t" style="left:662px;top:1080.87px;font-size:17.5px;color:#101010;font-family:'Liberation Mono',monospace;transform:scaleY(1.12);transform-origin:0 13.41px;">                     ConnectionTime</div>
<div style="left:1028.2px;top:1080.08px;width:218px;height:19.7px;background:#fdd9b5;box-sizing:border-box;border:1.7px solid #b06a26;"></div>
<div class="t" style="left:1118.7px;top:1083.20px;font-size:14.5px;color:#111;transform:scale(0.9182,1.0);transform-origin:0 12.28px;">T#30s</div>
<div class="t" style="left:1286.5px;top:1080.87px;font-size:17.5px;color:#3c3cff;font-family:'Liberation Mono',monospace;transform:scaleY(1.12);transform-origin:0 13.41px;">:= </div>
<div class="t" style="left:1318.0px;top:1080.87px;font-size:17.5px;color:#101010;font-family:'Liberation Mono',monospace;transform:scaleY(1.12);transform-origin:0 13.41px;">_ConnectionTime</div>
<div style="left:1474.2px;top:1080.08px;width:218px;height:19.7px;background:#fdd9b5;box-sizing:border-box;border:1.7px solid #b06a26;"></div>
<div class="t" style="left:1564.7px;top:1083.20px;font-size:14.5px;color:#111;transform:scale(0.9182,1.0);transform-origin:0 12.28px;">T#30s</div>
<div class="t" style="left:1690.5px;top:1080.87px;font-size:17.5px;color:#3c3cff;font-family:'Liberation Mono',monospace;transform:scaleY(1.12);transform-origin:0 13.41px;">,</div>
<div class="t" style="left:662px;top:1106.39px;font-size:17.5px;color:#101010;font-family:'Liberation Mono',monospace;transform:scaleY(1.12);transform-origin:0 13.41px;">                     LockTimesArray    </div>
<div class="t" style="left:1071.5px;top:1106.39px;font-size:17.5px;color:#3c3cff;font-family:'Liberation Mono',monospace;transform:scaleY(1.12);transform-origin:0 13.41px;">:= </div>
<div class="t" style="left:1103.0px;top:1106.39px;font-size:17.5px;color:#101010;font-family:'Liberation Mono',monospace;transform:scaleY(1.12);transform-origin:0 13.41px;">_LockTimesArray</div>
<div class="t" style="left:1260.5px;top:1106.39px;font-size:17.5px;color:#3c3cff;font-family:'Liberation Mono',monospace;transform:scaleY(1.12);transform-origin:0 13.41px;">,</div>
<div class="t" style="left:662px;top:1131.91px;font-size:17.5px;color:#101010;font-family:'Liberation Mono',monospace;transform:scaleY(1.12);transform-origin:0 13.41px;">                     Enabled</div>
<div style="left:956.5px;top:1132.72px;width:52px;height:16.2px;background:#000;"></div>
<div class="t" style="left:961.7px;top:1133.32px;font-size:15px;color:#fff;transform:scale(0.8913,1.0);transform-origin:0 12.70px;">FALSE</div>
<svg style="left:1126px;top:1133px;" width="21" height="14" viewBox="0 0 21 14"><path d="M2 4.5 H15 M2 9.5 H15 M11 1 L18 7 L11 13" fill="none" stroke="#3c3cff" stroke-width="1.8"/></svg>
<div class="t" style="left:1145.5px;top:1131.91px;font-size:17.5px;color:#101010;font-family:'Liberation Mono',monospace;transform:scaleY(1.12);transform-origin:0 13.41px;"> _Enabled</div>
<div style="left:1240.5px;top:1132.72px;width:52px;height:16.2px;background:#000;"></div>
<div class="t" style="left:1245.7px;top:1133.32px;font-size:15px;color:#fff;transform:scale(0.8913,1.0);transform-origin:0 12.70px;">FALSE</div>
<div class="t" style="left:1293.0px;top:1131.91px;font-size:17.5px;color:#3c3cff;font-family:'Liberation Mono',monospace;transform:scaleY(1.12);transform-origin:0 13.41px;">,</div>
<div class="t" style="left:662px;top:1157.43px;font-size:17.5px;color:#101010;font-family:'Liberation Mono',monospace;transform:scaleY(1.12);transform-origin:0 13.41px;">                     OutTimeRemaining</div>
<div style="left:1049.2px;top:1156.6399999999999px;width:218px;height:19.7px;background:#fdd9b5;box-sizing:border-box;border:1.7px solid #b06a26;"></div>
<div class="t" style="left:1139.7px;top:1159.76px;font-size:14.5px;color:#111;transform:scale(0.9182,1.0);transform-origin:0 12.28px;">T#30s</div>
<svg style="left:1288px;top:1159px;" width="21" height="14" viewBox="0 0 21 14"><path d="M2 4.5 H15 M2 9.5 H15 M11 1 L18 7 L11 13" fill="none" stroke="#3c3cff" stroke-width="1.8"/></svg>
<div class="t" style="left:1307.5px;top:1157.43px;font-size:17.5px;color:#101010;font-family:'Liberation Mono',monospace;transform:scaleY(1.12);transform-origin:0 13.41px;"> _OutTimeRemaining</div>
<div style="left:1495.2px;top:1156.6399999999999px;width:218px;height:19.7px;background:#fdd9b5;box-sizing:border-box;border:1.7px solid #b06a26;"></div>
<div class="t" style="left:1585.7px;top:1159.76px;font-size:14.5px;color:#111;transform:scale(0.9182,1.0);transform-origin:0 12.28px;">T#30s</div>
<div class="t" style="left:1711.5px;top:1157.43px;font-size:17.5px;color:#3c3cff;font-family:'Liberation Mono',monospace;transform:scaleY(1.12);transform-origin:0 13.41px;">,</div>
<div class="t" style="left:662px;top:1182.95px;font-size:17.5px;color:#101010;font-family:'Liberation Mono',monospace;transform:scaleY(1.12);transform-origin:0 13.41px;">                     LockTimeRemaining</div>
<div style="left:1059.7px;top:1182.16px;width:218px;height:19.7px;background:#fdd9b5;box-sizing:border-box;border:1.7px solid #b06a26;"></div>
<div class="t" style="left:1150.2px;top:1185.28px;font-size:14.5px;color:#111;transform:scale(0.9182,1.0);transform-origin:0 12.28px;">T#30s</div>
<svg style="left:1288px;top:1184px;" width="21" height="14" viewBox="0 0 21 14"><path d="M2 4.5 H15 M2 9.5 H15 M11 1 L18 7 L11 13" fill="none" stroke="#3c3cff" stroke-width="1.8"/></svg>
<div class="t" style="left:1307.5px;top:1182.95px;font-size:17.5px;color:#101010;font-family:'Liberation Mono',monospace;transform:scaleY(1.12);transform-origin:0 13.41px;"> _LockTimeRemaining</div>
<div style="left:1505.7px;top:1182.16px;width:218px;height:19.7px;background:#fdd9b5;box-sizing:border-box;border:1.7px solid #b06a26;"></div>
<div class="t" style="left:1596.2px;top:1185.28px;font-size:14.5px;color:#111;transform:scale(0.9182,1.0);transform-origin:0 12.28px;">T#30s</div>
<div class="t" style="left:1732.5px;top:1182.95px;font-size:17.5px;color:#3c3cff;font-family:'Liberation Mono',monospace;transform:scaleY(1.12);transform-origin:0 13.41px;">);</div>
<div class="t" style="left:662px;top:1233.99px;font-size:17.5px;color:#101010;font-family:'Liberation Mono',monospace;transform:scaleY(1.12);transform-origin:0 13.41px;">_StateMachine</div>
<div class="t" style="left:798.5px;top:1233.99px;font-size:17.5px;color:#3c3cff;font-family:'Liberation Mono',monospace;transform:scaleY(1.12);transform-origin:0 13.41px;">( </div>
<div class="t" style="left:819.5px;top:1233.99px;font-size:17.5px;color:#101010;font-family:'Liberation Mono',monospace;transform:scaleY(1.12);transform-origin:0 13.41px;">Connect</div>
<div style="left:893.5px;top:1234.8000000000002px;width:52px;height:16.2px;background:#0000ff;"></div>
<div class="t" style="left:900.15px;top:1235.40px;font-size:15px;color:#fff;transform:scale(0.9482,1.0);transform-origin:0 12.70px;">TRUE</div>
<div class="t" style="left:1093.0px;top:1233.99px;font-size:17.5px;color:#3c3cff;font-family:'Liberation Mono',monospace;transform:scaleY(1.12);transform-origin:0 13.41px;">:= </div>
<div class="t" style="left:1124.5px;top:1233.99px;font-size:17.5px;color:#101010;font-family:'Liberation Mono',monospace;transform:scaleY(1.12);transform-origin:0 13.41px;">_ExponentialBackOff</div>
<div class="t" style="left:1324.0px;top:1233.99px;font-size:17.5px;color:#3c3cff;font-family:'Liberation Mono',monospace;transform:scaleY(1.12);transform-origin:0 13.41px;">.</div>
<div class="t" style="left:1334.5px;top:1233.99px;font-size:17.5px;color:#101010;font-family:'Liberation Mono',monospace;transform:scaleY(1.12);transform-origin:0 13.41px;">out</div>
<div style="left:1366.5px;top:1234.8000000000002px;width:52px;height:16.2px;background:#0000ff;"></div>
<div class="t" style="left:1373.15px;top:1235.40px;font-size:15px;color:#fff;transform:scale(0.9482,1.0);transform-origin:0 12.70px;">TRUE</div>
<div class="t" style="left:1419.0px;top:1233.99px;font-size:17.5px;color:#3c3cff;font-family:'Liberation Mono',monospace;transform:scaleY(1.12);transform-origin:0 13.41px;">,</div>
<div class="t" style="left:662px;top:1259.51px;font-size:17.5px;color:#101010;font-family:'Liberation Mono',monospace;transform:scaleY(1.12);transform-origin:0 13.41px;">               PrimaryHostConnected</div>
<div style="left:1030.0px;top:1260.3200000000002px;width:52px;height:16.2px;background:#0000ff;"></div>
<div class="t" style="left:1036.65px;top:1260.92px;font-size:15px;color:#fff;transform:scale(0.9482,1.0);transform-origin:0 12.70px;">TRUE</div>
<div class="t" style="left:1093.0px;top:1259.51px;font-size:17.5px;color:#3c3cff;font-family:'Liberation Mono',monospace;transform:scaleY(1.12);transform-origin:0 13.41px;">:= </div>
<div class="t" style="left:1124.5px;top:1259.51px;font-size:17.5px;color:#101010;font-family:'Liberation Mono',monospace;transform:scaleY(1.12);transform-origin:0 13.41px;">Connected</div>
<div style="left:1219.5px;top:1260.3200000000002px;width:52px;height:16.2px;background:#0000ff;"></div>
<div class="t" style="left:1226.15px;top:1260.92px;font-size:15px;color:#fff;transform:scale(0.9482,1.0);transform-origin:0 12.70px;">TRUE</div>
<div class="t" style="left:1272.0px;top:1259.51px;font-size:17.5px;color:#3c3cff;font-family:'Liberation Mono',monospace;transform:scaleY(1.12);transform-origin:0 13.41px;">,</div>
<div class="t" style="left:662px;top:1285.03px;font-size:17.5px;color:#101010;font-family:'Liberation Mono',monospace;transform:scaleY(1.12);transform-origin:0 13.41px;">               pMQTT</div>
<div style="left:870.7px;top:1284.24px;width:181.5px;height:19.7px;background:#fdd9b5;box-sizing:border-box;border:1.7px solid #b06a26;"></div>
<div class="t" style="left:887.0500000000001px;top:1287.36px;font-size:14.5px;color:#111;transform:scale(0.9276,1.0);transform-origin:0 12.28px;">16#000001B57426CEE0</div>
<div class="t" style="left:1218.5px;top:1285.03px;font-size:17.5px;color:#3c3cff;font-family:'Liberation Mono',monospace;transform:scaleY(1.12);transform-origin:0 13.41px;">:= </div>
<div class="t" style="left:1250.0px;top:1285.03px;font-size:17.5px;color:#0000d8;font-weight:700;font-family:'Liberation Mono',monospace;transform:scaleY(1.12);transform-origin:0 13.41px;">ADR</div>
<div class="t" style="left:1281.5px;top:1285.03px;font-size:17.5px;color:#3c3cff;font-family:'Liberation Mono',monospace;transform:scaleY(1.12);transform-origin:0 13.41px;">( </div>
<div class="t" style="left:1302.5px;top:1285.03px;font-size:17.5px;color:#101010;font-family:'Liberation Mono',monospace;transform:scaleY(1.12);transform-origin:0 13.41px;">_MQTT </div>
<div class="t" style="left:1365.5px;top:1285.03px;font-size:17.5px;color:#3c3cff;font-family:'Liberation Mono',monospace;transform:scaleY(1.12);transform-origin:0 13.41px;">),</div>
<div class="t" style="left:662px;top:1310.55px;font-size:17.5px;color:#101010;font-family:'Liberation Mono',monospace;transform:scaleY(1.12);transform-origin:0 13.41px;">               pSparkplugB</div>
<div style="left:933.7px;top:1309.76px;width:181.5px;height:19.7px;background:#fdd9b5;box-sizing:border-box;border:1.7px solid #b06a26;"></div>
<div class="t" style="left:950.0500000000001px;top:1312.88px;font-size:14.5px;color:#111;transform:scale(0.9514,1.0);transform-origin:0 12.28px;">16#000001B5742995B0</div>
<div class="t" style="left:1218.5px;top:1310.55px;font-size:17.5px;color:#3c3cff;font-family:'Liberation Mono',monospace;transform:scaleY(1.12);transform-origin:0 13.41px;">:= </div>
<div class="t" style="left:1250.0px;top:1310.55px;font-size:17.5px;color:#0000d8;font-weight:700;font-family:'Liberation Mono',monospace;transform:scaleY(1.12);transform-origin:0 13.41px;">ADR</div>
<div class="t" style="left:1281.5px;top:1310.55px;font-size:17.5px;color:#3c3cff;font-family:'Liberation Mono',monospace;transform:scaleY(1.12);transform-origin:0 13.41px;">( </div>
<div class="t" style="left:1302.5px;top:1310.55px;font-size:17.5px;color:#101010;font-family:'Liberation Mono',monospace;transform:scaleY(1.12);transform-origin:0 13.41px;">_SparkplugB </div>
<div class="t" style="left:1428.5px;top:1310.55px;font-size:17.5px;color:#3c3cff;font-family:'Liberation Mono',monospace;transform:scaleY(1.12);transform-origin:0 13.41px;">),</div>
<div class="t" style="left:662px;top:1336.07px;font-size:17.5px;color:#101010;font-family:'Liberation Mono',monospace;transform:scaleY(1.12);transform-origin:0 13.41px;">               pPrimaryHost</div>
<div style="left:944.2px;top:1335.28px;width:181.5px;height:19.7px;background:#fdd9b5;box-sizing:border-box;border:1.7px solid #b06a26;"></div>
<div class="t" style="left:960.5500000000001px;top:1338.40px;font-size:14.5px;color:#111;transform:scale(0.9465,1.0);transform-origin:0 12.28px;">16#000001B57426C888</div>
<div class="t" style="left:1218.5px;top:1336.07px;font-size:17.5px;color:#3c3cff;font-family:'Liberation Mono',monospace;transform:scaleY(1.12);transform-origin:0 13.41px;">:= </div>
<div class="t" style="left:1250.0px;top:1336.07px;font-size:17.5px;color:#0000d8;font-weight:700;font-family:'Liberation Mono',monospace;transform:scaleY(1.12);transform-origin:0 13.41px;">THIS</div>
<div class="t" style="left:1292.0px;top:1336.07px;font-size:17.5px;color:#3c3cff;font-family:'Liberation Mono',monospace;transform:scaleY(1.12);transform-origin:0 13.41px;">,</div>
<div class="t" style="left:662px;top:1361.59px;font-size:17.5px;color:#101010;font-family:'Liberation Mono',monospace;transform:scaleY(1.12);transform-origin:0 13.41px;">               SessionState</div>
<div style="left:944.2px;top:1360.8px;width:127.5px;height:19.7px;background:#fdd9b5;box-sizing:border-box;border:1.7px solid #b06a26;"></div>
<div class="t" style="left:982.1500000000001px;top:1363.92px;font-size:14.5px;color:#111;transform:scale(0.9558,1.0);transform-origin:0 12.28px;">ONLINE</div>
<svg style="left:1166px;top:1363px;" width="21" height="14" viewBox="0 0 21 14"><path d="M2 4.5 H15 M2 9.5 H15 M11 1 L18 7 L11 13" fill="none" stroke="#3c3cff" stroke-width="1.8"/></svg>
<div class="t" style="left:1185.5px;top:1361.59px;font-size:17.5px;color:#101010;font-family:'Liberation Mono',monospace;transform:scaleY(1.12);transform-origin:0 13.41px;"> SessionState</div>
<div style="left:1320.7px;top:1360.8px;width:127.5px;height:19.7px;background:#fdd9b5;box-sizing:border-box;border:1.7px solid #b06a26;"></div>
<div class="t" style="left:1358.65px;top:1363.92px;font-size:14.5px;color:#111;transform:scale(0.9558,1.0);transform-origin:0 12.28px;">ONLINE</div>
<div class="t" style="left:1457.0px;top:1361.59px;font-size:17.5px;color:#3c3cff;font-family:'Liberation Mono',monospace;transform:scaleY(1.12);transform-origin:0 13.41px;">);</div>
</body></html>
